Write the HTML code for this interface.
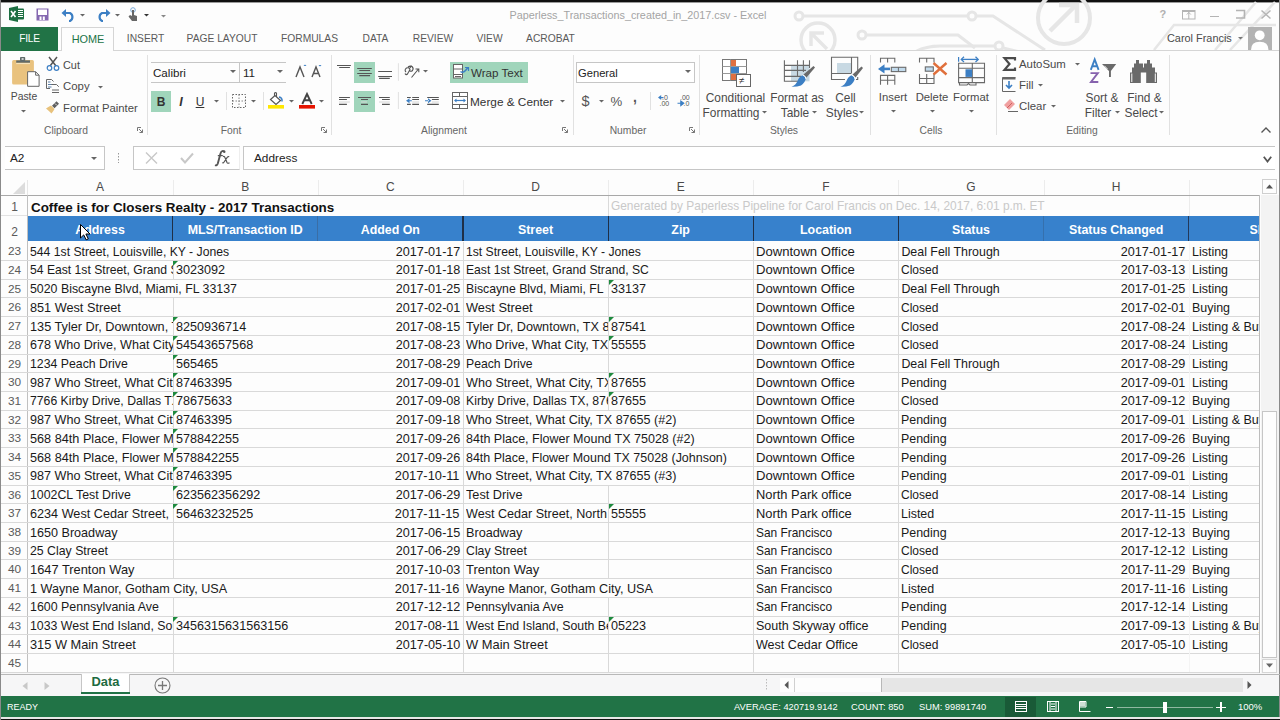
<!DOCTYPE html>
<html><head><meta charset="utf-8"><title>Excel</title>
<style>
html,body{margin:0;padding:0;}
body{width:1280px;height:720px;position:relative;overflow:hidden;background:#fdfdfd;font-family:"Liberation Sans", sans-serif;}
.t{position:absolute;white-space:nowrap;line-height:1;}
.r{position:absolute;}
.s{position:absolute;overflow:visible;}
</style></head><body>

<div class="r" style="left:0.00px;top:0.00px;width:1280.00px;height:1.50px;background:#101010;"></div>
<div class="r" style="left:0.00px;top:1.50px;width:1280.00px;height:0.80px;background:#9a9a9a;"></div>
<svg class="s" style="left:790px;top:0px;overflow:hidden" width="490" height="50" viewBox="0 0 490 50">
<g fill="none" stroke="#e6e6e6" stroke-width="3">
<path d="M9 16 H203 L255 50"/>
<circle cx="9" cy="16" r="4" fill="#fdfdfd"/>
<circle cx="182" cy="16" r="4" fill="#fdfdfd"/>
<path d="M72 35 H168 L185 48"/>
<circle cx="72" cy="35" r="4" fill="#fdfdfd"/>
<path d="M125 52 Q135 46 150 46 H205 L230 52"/>
<circle cx="209" cy="46" r="4" fill="#fdfdfd"/>
<circle cx="28" cy="40" r="17" stroke-width="3.5"/>
<path d="M37 49 L22 34 M21 46 V33 H34" stroke-width="3.5"/>
<circle cx="274" cy="18" r="26" stroke-width="4"/>
<path d="M260 31 L285 6 M269 5 H287 V23" stroke-width="4.5"/>
<path d="M364 50 L384 25 H486" stroke-width="2.5"/><path d="M425 50 L466 2 M440 50 L485 2" stroke-width="2.5"/>
</g></svg>
<svg class="s" style="left:9px;top:6px;" width="16" height="16" viewBox="0 0 16 16">
<path d="M0 2 L9 0 V16 L0 14 Z" fill="#1d6f42"/>
<rect x="8" y="2.5" width="7" height="11" rx="1" fill="#1d6f42"/>
<path d="M9 4.5 H14 M9 6.5 H14 M9 8.5 H14 M9 10.5 H14" stroke="#fff" stroke-width="1"/>
<path d="M2 5 L6.5 11 M6.5 5 L2 11" stroke="#fff" stroke-width="1.6"/></svg>
<svg class="s" style="left:36px;top:8px;" width="13" height="13" viewBox="0 0 13 13">
<rect x="0.5" y="0.5" width="12" height="12" fill="#8467b0"/>
<rect x="2" y="1.5" width="9" height="5.5" fill="#fff"/>
<rect x="3.5" y="8.5" width="2" height="3.5" fill="#fff"/>
<rect x="6.8" y="8.5" width="2" height="3.5" fill="#fff"/></svg>
<svg class="s" style="left:61px;top:9px;" width="15" height="13" viewBox="0 0 15 13">
<path d="M3 4 H9 A4.5 4.5 0 0 1 9 12 H8" fill="none" stroke="#3c7fc4" stroke-width="2.2"/>
<path d="M0.5 4 L5 0 V8 Z" fill="#3c7fc4"/></svg>
<svg class="s" style="left:79.5px;top:14px;" width="5.0" height="3.5" viewBox="0 0 5.0 3.5"><path d="M0 0 L5.0 0 L2.5 2.5 Z" fill="#666"/></svg>
<svg class="s" style="left:96px;top:9px;" width="15" height="13" viewBox="0 0 15 13">
<path d="M12 4 H6 A4.5 4.5 0 0 0 6 12 H7" fill="none" stroke="#3c7fc4" stroke-width="2.2"/>
<path d="M14.5 4 L10 0 V8 Z" fill="#3c7fc4"/></svg>
<svg class="s" style="left:114.5px;top:14px;" width="5.0" height="3.5" viewBox="0 0 5.0 3.5"><path d="M0 0 L5.0 0 L2.5 2.5 Z" fill="#666"/></svg>
<svg class="s" style="left:126px;top:7px;" width="12" height="15" viewBox="0 0 12 15">
<circle cx="7" cy="3" r="2.3" fill="none" stroke="#7aaad8" stroke-width="1"/>
<path d="M6 3 V9 L4 8 L2.5 9.5 L6 14 H11 V9 L8 8 V3 Z" fill="#666"/></svg>
<svg class="s" style="left:143.5px;top:14px;" width="5.0" height="3.5" viewBox="0 0 5.0 3.5"><path d="M0 0 L5.0 0 L2.5 2.5 Z" fill="#333"/></svg>
<svg class="s" style="left:160.5px;top:15px;" width="5.0" height="3.5" viewBox="0 0 5.0 3.5"><path d="M0 0 L5.0 0 L2.5 2.5 Z" fill="#888"/></svg>
<div class="t" style="left:338.00px;width:600px;text-align:center;top:9.86px;font-size:10.8px;color:#a4a4a4;font-weight:400;">Paperless_Transactions_created_in_2017.csv - Excel</div>
<div class="t" style="left:862.80px;width:600px;text-align:center;top:9.19px;font-size:11px;color:#b0b0b0;font-weight:700;">?</div>
<svg class="s" style="left:1182px;top:10px;" width="14" height="10" viewBox="0 0 14 10"><rect x="0.5" y="0.5" width="12.5" height="8.5" fill="none" stroke="#b4b4b4"/><path d="M0.5 1.5 H13 M6.8 2 V9 M4.8 4.5 L6.8 2.5 L8.8 4.5" fill="none" stroke="#b4b4b4"/></svg>
<div class="r" style="left:1210.00px;top:15.50px;width:9.00px;height:1.20px;background:#b4b4b4;"></div>
<svg class="s" style="left:1235px;top:9px;" width="11" height="11" viewBox="0 0 11 11"><path d="M1 1.5 H9.5 V9 H1" fill="none" stroke="#b4b4b4" stroke-width="1.6"/></svg>
<svg class="s" style="left:1261px;top:10px;" width="10" height="9" viewBox="0 0 10 9"><path d="M0.5 0.5 L9.5 8.5 M9.5 0.5 L0.5 8.5" stroke="#b4b4b4" stroke-width="1.5"/></svg>
<div class="t" style="left:1167.00px;top:32.77px;font-size:10.9px;color:#4a4a4a;font-weight:400;">Carol Francis</div>
<svg class="s" style="left:1237.5px;top:37px;" width="5.0" height="3.5" viewBox="0 0 5.0 3.5"><path d="M0 0 L5.0 0 L2.5 2.5 Z" fill="#777"/></svg>
<svg class="s" style="left:1248px;top:27px;" width="24" height="23" viewBox="0 0 24 23">
<rect width="24" height="23" fill="#b3b3b3"/>
<circle cx="11.7" cy="8.3" r="4.9" fill="#fff"/>
<path d="M3 23 Q3 14.8 11.7 14.8 Q20.5 14.8 20.5 23 Z" fill="#fff"/></svg>
<div class="r" style="left:0.00px;top:50.00px;width:1280.00px;height:1.00px;background:#d5d5d5;"></div>
<div class="r" style="left:1.00px;top:27.00px;width:57.00px;height:23.50px;background:#217346;"></div>
<div class="t" style="left:-270.50px;width:600px;text-align:center;top:34.17px;font-size:10.2px;color:#fff;font-weight:400;letter-spacing:-0.3px">FILE</div>
<div class="r" style="left:61px;top:27px;width:53px;height:24px;background:#fdfdfd;border:1px solid #d5d5d5;border-bottom:none;box-sizing:border-box;"></div>
<div class="t" style="left:-212.00px;width:600px;text-align:center;top:33.57px;font-size:10.9px;color:#217346;font-weight:400;">HOME</div>
<div class="t" style="left:-154.50px;width:600px;text-align:center;top:34.12px;font-size:10.25px;color:#5a5a5a;font-weight:400;">INSERT</div>
<div class="t" style="left:-78.00px;width:600px;text-align:center;top:34.12px;font-size:10.25px;color:#5a5a5a;font-weight:400;">PAGE LAYOUT</div>
<div class="t" style="left:9.50px;width:600px;text-align:center;top:34.12px;font-size:10.25px;color:#5a5a5a;font-weight:400;">FORMULAS</div>
<div class="t" style="left:75.50px;width:600px;text-align:center;top:34.12px;font-size:10.25px;color:#5a5a5a;font-weight:400;">DATA</div>
<div class="t" style="left:133.00px;width:600px;text-align:center;top:34.12px;font-size:10.25px;color:#5a5a5a;font-weight:400;">REVIEW</div>
<div class="t" style="left:189.50px;width:600px;text-align:center;top:34.12px;font-size:10.25px;color:#5a5a5a;font-weight:400;">VIEW</div>
<div class="t" style="left:250.50px;width:600px;text-align:center;top:34.12px;font-size:10.25px;color:#5a5a5a;font-weight:400;">ACROBAT</div>
<div class="r" style="left:146.50px;top:55.00px;width:1.00px;height:80.00px;background:#e1e1e1;"></div>
<div class="r" style="left:330.50px;top:55.00px;width:1.00px;height:80.00px;background:#e1e1e1;"></div>
<div class="r" style="left:572.50px;top:55.00px;width:1.00px;height:80.00px;background:#e1e1e1;"></div>
<div class="r" style="left:698.50px;top:55.00px;width:1.00px;height:80.00px;background:#e1e1e1;"></div>
<div class="r" style="left:869.50px;top:55.00px;width:1.00px;height:80.00px;background:#e1e1e1;"></div>
<div class="r" style="left:995.50px;top:55.00px;width:1.00px;height:80.00px;background:#e1e1e1;"></div>
<div class="r" style="left:1169.00px;top:55.00px;width:1.00px;height:80.00px;background:#e1e1e1;"></div>
<svg class="s" style="left:11px;top:56px;" width="30" height="34" viewBox="0 0 30 34">
<rect x="1.1" y="4" width="21.8" height="24.6" rx="1.5" fill="#e9c27e"/>
<rect x="5.2" y="4.4" width="13.8" height="2.3" fill="#5f6a6a"/>
<rect x="9" y="1" width="5.2" height="4" rx="0.8" fill="#5f6a6a"/>
<rect x="10.6" y="2.2" width="2" height="1.6" fill="#e9e9e9"/>
<path d="M5.2 7.6 H19" stroke="#f7e9c8" stroke-width="0.9"/>
<path d="M16.6 15.7 H24.6 L28.1 19.2 V30.3 H16.6 Z" fill="#fff" stroke="#666" stroke-width="1"/>
<path d="M24.6 15.7 V19.2 H28.1" fill="none" stroke="#666" stroke-width="1"/></svg>
<div class="t" style="left:-276.00px;width:600px;text-align:center;top:92.20px;font-size:10.4px;color:#4a4a4a;font-weight:400;">Paste</div>
<svg class="s" style="left:21.0px;top:110px;" width="5.0" height="3.5" viewBox="0 0 5.0 3.5"><path d="M0 0 L5.0 0 L2.5 2.5 Z" fill="#666"/></svg>
<svg class="s" style="left:46px;top:57px;" width="14" height="14" viewBox="0 0 14 14">
<path d="M3 0 L10 9 M11 0 L4 9" stroke="#555" stroke-width="1.5"/>
<circle cx="3.5" cy="11" r="2.3" fill="none" stroke="#3c7fc4" stroke-width="1.2"/>
<circle cx="10.5" cy="11" r="2.3" fill="none" stroke="#3c7fc4" stroke-width="1.2"/></svg>
<div class="t" style="left:63.00px;top:59.77px;font-size:10.9px;color:#4a4a4a;font-weight:400;">Cut</div>
<svg class="s" style="left:46px;top:79px;" width="14" height="15" viewBox="0 0 14 15">
<path d="M0.5 9.5 V0.5 H5.5 L7.5 2.5" fill="none" stroke="#666"/>
<path d="M2 3 H4.5 M2 5.5 H6 M2 8 H5.5" stroke="#5a7fa8"/>
<path d="M5.5 5.5 H10.5 L12.8 7.8 M6 11 H13 M6 13.5 H13" fill="none" stroke="#666"/>
<path d="M0.5 9.5 H4" stroke="#666"/></svg>
<div class="t" style="left:63.00px;top:81.35px;font-size:11.4px;color:#4a4a4a;font-weight:400;">Copy</div>
<svg class="s" style="left:97.5px;top:86px;" width="5.0" height="3.5" viewBox="0 0 5.0 3.5"><path d="M0 0 L5.0 0 L2.5 2.5 Z" fill="#666"/></svg>
<svg class="s" style="left:46px;top:100px;" width="14" height="14" viewBox="0 0 14 14">
<path d="M0 8.5 Q3 6.5 5 5.5 L8.5 9 Q7.5 11 5.5 13.5 Q3 11 0 8.5 Z" fill="#e8c27c"/>
<path d="M6 5.8 L10.5 1.2 L13 3.7 L8.5 8.3 Z" fill="#606060"/>
<path d="M9 3.5 L10.8 5.3" stroke="#fff" stroke-width="0.8"/></svg>
<div class="t" style="left:63.00px;top:103.43px;font-size:11.3px;color:#4a4a4a;font-weight:400;">Format Painter</div>
<div class="t" style="left:-234.00px;width:600px;text-align:center;top:126.18px;font-size:10.3px;color:#666;font-weight:400;">Clipboard</div>
<svg class="s" style="left:137px;top:127px;" width="6" height="6" viewBox="0 0 6 6"><path d="M0.5 0.5 H4 M0.5 0.5 V4 M2 2 L5.5 5.5 M5.5 2.5 V5.5 H2.5" fill="none" stroke="#777" stroke-width="1"/></svg>
<div class="r" style="left:151.00px;top:62.00px;width:135.00px;height:1.00px;background:#c6c6c6;"></div>
<div class="r" style="left:151.00px;top:82.00px;width:135.00px;height:1.00px;background:#c6c6c6;"></div>
<div class="r" style="left:239.00px;top:62.00px;width:1.00px;height:21.00px;background:#c6c6c6;"></div>
<div class="t" style="left:153.00px;top:67.18px;font-size:11.6px;color:#222;font-weight:400;">Calibri</div>
<svg class="s" style="left:230px;top:70px;" width="6" height="4" viewBox="0 0 6 4"><path d="M0 0 L6 0 L3 3 Z" fill="#666"/></svg>
<div class="t" style="left:243.00px;top:67.18px;font-size:11.6px;color:#222;font-weight:400;">11</div>
<svg class="s" style="left:277px;top:70px;" width="6" height="4" viewBox="0 0 6 4"><path d="M0 0 L6 0 L3 3 Z" fill="#666"/></svg>
<svg class="s" style="left:294px;top:64px;" width="28" height="14" viewBox="0 0 28 14">
<path d="M2 13 L6 3 L10 13" fill="none" stroke="#555" stroke-width="1.4"/>
<path d="M9.5 2 L11 0.5 L12.5 2" fill="#3c7fc4"/>
<path d="M18 13 L22 3 L26 13 M19.5 9.5 H24.5" fill="none" stroke="#555" stroke-width="1.4"/>
<path d="M24.5 1 L26 2.5 L27.5 1 Z" fill="#3c7fc4"/></svg>
<div class="r" style="left:151.00px;top:91.00px;width:20.00px;height:21.00px;background:#a0d5bb;"></div>
<div class="t" style="left:-139.00px;width:600px;text-align:center;top:96.34px;font-size:12px;color:#333;font-weight:700;">B</div>
<div class="t" style="left:-119.00px;width:600px;text-align:center;top:95.92px;font-size:12.5px;color:#333;font-weight:700;font-style:italic">I</div>
<div class="t" style="left:-100.00px;width:600px;text-align:center;top:96.34px;font-size:12px;color:#333;font-weight:400;text-decoration:underline">U</div>
<svg class="s" style="left:213.5px;top:100px;" width="5.0" height="3.5" viewBox="0 0 5.0 3.5"><path d="M0 0 L5.0 0 L2.5 2.5 Z" fill="#666"/></svg>
<div class="r" style="left:225.50px;top:92.00px;width:1.00px;height:18.00px;background:#e1e1e1;"></div>
<svg class="s" style="left:232px;top:94px;" width="14" height="14" viewBox="0 0 14 14"><rect x="0.5" y="0.5" width="13" height="13" fill="none" stroke="#666" stroke-dasharray="1.5 1.5"/><path d="M7 0.5 V13.5 M0.5 7 H13.5" stroke="#888" stroke-dasharray="1.5 1.5"/></svg>
<svg class="s" style="left:250.5px;top:100px;" width="5.0" height="3.5" viewBox="0 0 5.0 3.5"><path d="M0 0 L5.0 0 L2.5 2.5 Z" fill="#666"/></svg>
<div class="r" style="left:262.50px;top:92.00px;width:1.00px;height:18.00px;background:#e1e1e1;"></div>
<svg class="s" style="left:268px;top:92px;" width="17" height="18" viewBox="0 0 17 18">
<path d="M2.5 7.5 L7 3.5 L12.5 8.5 L8 12.5 Z" fill="#fff" stroke="#555" stroke-width="1.2"/>
<path d="M6.5 4 V1.2 Q7.5 0 8.5 1.2 V5" fill="none" stroke="#555" stroke-width="1.1"/>
<path d="M11 5 Q14.5 5.5 14 9.5" fill="none" stroke="#3c7fc4" stroke-width="1.5"/>
<rect x="0" y="13" width="16" height="3.6" fill="#ffe700"/></svg>
<svg class="s" style="left:288.5px;top:100px;" width="5.0" height="3.5" viewBox="0 0 5.0 3.5"><path d="M0 0 L5.0 0 L2.5 2.5 Z" fill="#666"/></svg>
<svg class="s" style="left:299px;top:92px;" width="17" height="18" viewBox="0 0 17 18">
<path d="M3.3 12 L8 2 L12.7 12 M5.2 8.3 H10.8" fill="none" stroke="#444" stroke-width="1.9"/>
<rect x="0" y="13" width="16" height="3.6" fill="#e51400"/></svg>
<svg class="s" style="left:318.5px;top:100px;" width="5.0" height="3.5" viewBox="0 0 5.0 3.5"><path d="M0 0 L5.0 0 L2.5 2.5 Z" fill="#666"/></svg>
<div class="t" style="left:-69.00px;width:600px;text-align:center;top:126.18px;font-size:10.3px;color:#666;font-weight:400;">Font</div>
<svg class="s" style="left:321px;top:127px;" width="6" height="6" viewBox="0 0 6 6"><path d="M0.5 0.5 H4 M0.5 0.5 V4 M2 2 L5.5 5.5 M5.5 2.5 V5.5 H2.5" fill="none" stroke="#777" stroke-width="1"/></svg>
<div class="r" style="left:354.00px;top:62.00px;width:21.00px;height:21.00px;background:#a0d5bb;"></div>
<div class="r" style="left:354.00px;top:91.00px;width:21.00px;height:21.00px;background:#a0d5bb;"></div>
<svg class="s" style="left:334px;top:58px;" width="110" height="56" viewBox="0 0 110 56">
<g stroke="#555" stroke-width="1.1">
<path d="M3 7.5 H16.9 M5.2 9.5 H15.9"/>
<path d="M23.2 10.5 H37.8 M25.3 12.5 H36.1 M23.2 15.5 H37.8 M25.3 17.6 H36.1"/>
<path d="M44.2 13.5 H58 M44.2 18.5 H58 M45.1 20.4 H55.8"/>
<path d="M5 39.5 H15.9 M5 41.5 H12.9 M5 46.4 H12.9"/>
<path d="M24 39.5 H37 M27 41.5 H34 M27 46.4 H34"/>
<path d="M45 39.5 H55.8 M48 41.5 H55.8 M48 46.4 H55.8"/>
<path d="M73 39.5 H76.8 M78.2 39.5 H85 M78.2 41.5 H85 M73 46.4 H76.8 M78.2 46.4 H85"/>
<path d="M93.2 39.5 H104.8 M97.9 41.5 H104.8 M93.2 46.4 H104.8"/>
</g>
<g stroke="#d6d6d6" stroke-width="1"><path d="M5 44 H15.9 M27 44 H33 M45 44 H55.8 M78.2 44 H85 M97.9 44 H104.8"/></g>
<path d="M72 42.7 L75.5 40.2 V45.2 Z M74.5 42.2 H77.8 V43.3 H74.5 Z" fill="#3c7fc4"/>
<path d="M97.5 42.7 L94 40.2 V45.2 Z M91 42.2 H95 V43.3 H91 Z" fill="#3c7fc4"/>
<path d="M64.4 5.2 V22.8 M64.4 34 V51" stroke="#e1e1e1" stroke-width="1"/>
<path d="M72 14 Q70 12 72.5 10 Q75 9 76 11.5 L73.5 16 Q72 17.5 71 15.5 M74 9 Q76 7.5 78 8.5 Q80 10.5 78.5 12.5 Q77 14 75.5 12.5 M77.5 7.5 L76 10" fill="none" stroke="#555" stroke-width="1.1"/>
<path d="M77.5 19.5 L84.5 11 M81.5 11 H84.8 V14.3" fill="none" stroke="#555" stroke-width="1.1"/></svg>
<svg class="s" style="left:423.0px;top:70px;" width="5.0" height="3.5" viewBox="0 0 5.0 3.5"><path d="M0 0 L5.0 0 L2.5 2.5 Z" fill="#666"/></svg>
<div class="r" style="left:450.00px;top:62.00px;width:78.00px;height:21.00px;background:#a0d5bb;"></div>
<svg class="s" style="left:453px;top:64px;" width="17" height="16" viewBox="0 0 17 16">
<rect x="0.5" y="0.5" width="9" height="13.5" fill="#fff" stroke="#666"/>
<path d="M0.5 5 H9.5 M0.5 10.5 H9.5" stroke="#666"/>
<path d="M2 12.5 H8" stroke="#666"/>
<path d="M7.5 7.5 Q10 9.5 12.5 6.5 L15 3.5" fill="none" stroke="#3c7fc4" stroke-width="1.5"/>
<path d="M12 3.5 H15.5 V7" fill="none" stroke="#3c7fc4" stroke-width="1.2"/></svg>
<div class="t" style="left:471.00px;top:66.78px;font-size:11.6px;color:#333;font-weight:400;">Wrap Text</div>
<svg class="s" style="left:452px;top:92px;" width="16" height="17" viewBox="0 0 16 17">
<rect x="0.5" y="0.5" width="15" height="16" fill="#fff" stroke="#666"/>
<path d="M0.5 4.5 H15.5 M0.5 12.5 H15.5 M7.5 0.5 V4.5 M7.5 12.5 V16.5" stroke="#666"/>
<path d="M3 8.5 H13" stroke="#3c7fc4" stroke-width="1.2"/>
<path d="M2 8.5 L4.5 6.5 V10.5 Z M14 8.5 L11.5 6.5 V10.5 Z" fill="#3c7fc4"/></svg>
<div class="t" style="left:470.00px;top:96.51px;font-size:11.8px;color:#333;font-weight:400;">Merge &amp; Center</div>
<svg class="s" style="left:559.5px;top:100px;" width="5.0" height="3.5" viewBox="0 0 5.0 3.5"><path d="M0 0 L5.0 0 L2.5 2.5 Z" fill="#666"/></svg>
<div class="t" style="left:144.00px;width:600px;text-align:center;top:126.18px;font-size:10.3px;color:#666;font-weight:400;">Alignment</div>
<svg class="s" style="left:562px;top:127px;" width="6" height="6" viewBox="0 0 6 6"><path d="M0.5 0.5 H4 M0.5 0.5 V4 M2 2 L5.5 5.5 M5.5 2.5 V5.5 H2.5" fill="none" stroke="#777" stroke-width="1"/></svg>
<div class="r" style="left:576px;top:62px;width:119px;height:21px;background:#fff;border:1px solid #c6c6c6;box-sizing:border-box;"></div>
<div class="t" style="left:578.00px;top:67.52px;font-size:11.2px;color:#222;font-weight:400;">General</div>
<svg class="s" style="left:685px;top:70px;" width="6" height="4" viewBox="0 0 6 4"><path d="M0 0 L6 0 L3 3 Z" fill="#666"/></svg>
<div class="t" style="left:285.50px;width:600px;text-align:center;top:94.03px;font-size:14.5px;color:#555;font-weight:400;">$</div>
<svg class="s" style="left:598.5px;top:100px;" width="5.0" height="3.5" viewBox="0 0 5.0 3.5"><path d="M0 0 L5.0 0 L2.5 2.5 Z" fill="#666"/></svg>
<div class="t" style="left:316.30px;width:600px;text-align:center;top:94.83px;font-size:13.2px;color:#555;font-weight:400;">%</div>
<div class="t" style="left:335.00px;width:600px;text-align:center;top:90.15px;font-size:14px;color:#555;font-weight:700;">,</div>
<div class="r" style="left:650.00px;top:92.00px;width:1.00px;height:18.00px;background:#e1e1e1;"></div>
<svg class="s" style="left:657px;top:94px;" width="14" height="13" viewBox="0 0 14 13">
<text x="5" y="6" font-size="7" fill="#555" font-family="Liberation Sans">.0</text>
<text x="2.5" y="12.3" font-size="7" fill="#555" font-family="Liberation Sans">.00</text>
<path d="M1 3.5 L4.2 1 V6 Z M3.5 3 H6.5 V4.2 H3.5 Z" fill="#3c7fc4"/></svg>
<svg class="s" style="left:677px;top:94px;" width="14" height="13" viewBox="0 0 14 13">
<text x="3" y="6" font-size="7" fill="#555" font-family="Liberation Sans">.00</text>
<text x="6.5" y="12.3" font-size="7" fill="#555" font-family="Liberation Sans">.0</text>
<path d="M0.5 9.3 H4 M6.8 9.3 L3.8 7 V11.6 Z" fill="#3c7fc4" stroke="#3c7fc4" stroke-width="1.1"/></svg>
<div class="t" style="left:328.00px;width:600px;text-align:center;top:126.18px;font-size:10.3px;color:#666;font-weight:400;">Number</div>
<svg class="s" style="left:689px;top:127px;" width="6" height="6" viewBox="0 0 6 6"><path d="M0.5 0.5 H4 M0.5 0.5 V4 M2 2 L5.5 5.5 M5.5 2.5 V5.5 H2.5" fill="none" stroke="#777" stroke-width="1"/></svg>
<svg class="s" style="left:722px;top:59px;" width="29" height="29" viewBox="0 0 29 29">
<rect x="0.5" y="0.5" width="24" height="21" fill="#fff" stroke="#777"/>
<path d="M0.5 7.5 H24.5 M0.5 14.5 H24.5 M8.5 0.5 V21.5" stroke="#999"/>
<rect x="9" y="1" width="5" height="6" fill="#e07040"/>
<rect x="9" y="8" width="8" height="6" fill="#3c7fc4"/>
<rect x="9" y="15" width="6" height="6" fill="#e07040"/>
<rect x="14.5" y="15.5" width="14" height="12" fill="#fff" stroke="#666"/>
<text x="17" y="25" font-size="10" fill="#333" font-family="Liberation Sans">&#8800;</text></svg>
<div class="t" style="left:435.50px;width:600px;text-align:center;top:92.73px;font-size:11.9px;color:#4a4a4a;font-weight:400;">Conditional</div>
<div class="t" style="left:431.00px;width:600px;text-align:center;top:107.53px;font-size:11.9px;color:#4a4a4a;font-weight:400;">Formatting</div>
<svg class="s" style="left:761.5px;top:111px;" width="5.0" height="3.5" viewBox="0 0 5.0 3.5"><path d="M0 0 L5.0 0 L2.5 2.5 Z" fill="#666"/></svg>
<svg class="s" style="left:775px;top:52px;" width="95" height="38" viewBox="0 0 95 38">
<rect x="16" y="13.4" width="18.5" height="15.9" fill="#c8d9e3"/>
<g fill="none" stroke="#6a6a6a" stroke-width="1.1">
<path d="M9.4 8.2 V29.3 H24 M22.5 8.2 V24 M28.4 8.2 V20 M34.5 8.2 V16 M9.4 13.4 H34.5 M9.4 18.4 H31 M9.4 24.4 H26"/>
</g>
<path d="M38.5 14 L40 15.5 L31.5 25.5 L28.5 22.5 Z" fill="#6a6a6a"/>
<path d="M28 23 L31 26 Q30 31 26 33.5 Q22 35 16.5 34.8 Q21 33 22.5 29 Q24 24.5 28 23 Z" fill="#3c7fc4"/>
<path d="M27.5 23 Q31 24 31 27" fill="none" stroke="#fff" stroke-width="1"/>
<rect x="62" y="11" width="14.3" height="10.3" fill="#c8d9e3"/>
<g fill="none" stroke="#6a6a6a" stroke-width="1.1">
<path d="M70 27.5 H56.5 V5.2 H82.7 V19 M76.5 5.2 V21.5 M56.5 21.5 H76 M82.7 25 V27.5 H81"/>
</g>
<path d="M86.5 14.5 L88 16 L80.5 25.5 L77.5 22.5 Z" fill="#6a6a6a"/>
<path d="M77 23 L80 26 Q79 31 75 33.5 Q71 35 65.5 34.8 Q70 33 71.5 29 Q73 24.5 77 23 Z" fill="#3c7fc4"/>
<path d="M76.5 23 Q80 24 80 27" fill="none" stroke="#fff" stroke-width="1"/></svg>
<div class="t" style="left:497.00px;width:600px;text-align:center;top:92.73px;font-size:11.9px;color:#4a4a4a;font-weight:400;">Format as</div>
<div class="t" style="left:495.00px;width:600px;text-align:center;top:107.53px;font-size:11.9px;color:#4a4a4a;font-weight:400;">Table</div>
<svg class="s" style="left:811.5px;top:111px;" width="5.0" height="3.5" viewBox="0 0 5.0 3.5"><path d="M0 0 L5.0 0 L2.5 2.5 Z" fill="#666"/></svg>
<div class="t" style="left:545.50px;width:600px;text-align:center;top:92.73px;font-size:11.9px;color:#4a4a4a;font-weight:400;">Cell</div>
<div class="t" style="left:542.00px;width:600px;text-align:center;top:107.53px;font-size:11.9px;color:#4a4a4a;font-weight:400;">Styles</div>
<svg class="s" style="left:858.5px;top:111px;" width="5.0" height="3.5" viewBox="0 0 5.0 3.5"><path d="M0 0 L5.0 0 L2.5 2.5 Z" fill="#666"/></svg>
<div class="t" style="left:484.00px;width:600px;text-align:center;top:126.18px;font-size:10.3px;color:#666;font-weight:400;">Styles</div>
<svg class="s" style="left:875px;top:52px;" width="115" height="36" viewBox="0 0 115 36">
<g fill="none" stroke="#6a6a6a" stroke-width="1.1">
<path d="M5.5 10.5 V6.3 H19.8 V10.5 M12.6 6.3 V10.5"/>
<path d="M5.5 32.8 V23.4 H19.8 V32.8 M12.6 23.4 V32.8 M5.5 28.3 H19.8"/>
<path d="M44.5 10.5 V6.3 H59 V10.5 M51.7 6.3 V10.5"/>
<path d="M44.5 22 V31.5 H59 V22 M51.7 22 V31.5 M44.5 26.5 H59"/>
<path d="M83.6 11.3 H109.5 V30.6 H83.6 Z M83.6 16.2 H109.5 M83.6 25.6 H109.5 M97.3 11.3 V30.6"/>
<path d="M84.5 30.6 V33 H92 L93.5 31.5 L95 33 H101 V30.6"/>
</g>
<rect x="16.3" y="15.3" width="14.5" height="4.3" fill="#c2dbed" stroke="#6a6a6a" stroke-width="1.1"/>
<path d="M23.4 15.3 V19.6" stroke="#6a6a6a"/>
<path d="M6 16.9 H15" stroke="#3c7fc4" stroke-width="2.6"/>
<path d="M3 16.9 L9.5 12.3 V21.5 Z" fill="#3c7fc4"/>
<rect x="50.3" y="14.9" width="8" height="4.3" fill="#c2dbed" stroke="#6a6a6a" stroke-width="1.1"/>
<path d="M58.5 11 L71.5 22.5 M71.5 11 L58.5 22.5" stroke="#e0703c" stroke-width="2.4"/>
<path d="M83.6 5 V9.8" stroke="#3c7fc4" stroke-width="1.2"/>
<path d="M86.5 7.4 H103" stroke="#3c7fc4" stroke-width="1.3"/>
<path d="M89 4.8 L86.3 7.4 L89 10 M100.5 4.8 L103.2 7.4 L100.5 10" fill="none" stroke="#3c7fc4" stroke-width="1.3"/>
<rect x="90.5" y="17.3" width="6.6" height="7.6" fill="#3c7fc4"/></svg>
<div class="t" style="left:593.00px;width:600px;text-align:center;top:92.43px;font-size:11.3px;color:#4a4a4a;font-weight:400;">Insert</div>
<svg class="s" style="left:890.5px;top:110px;" width="5.0" height="3.5" viewBox="0 0 5.0 3.5"><path d="M0 0 L5.0 0 L2.5 2.5 Z" fill="#666"/></svg>
<div class="t" style="left:632.00px;width:600px;text-align:center;top:92.43px;font-size:11.3px;color:#4a4a4a;font-weight:400;">Delete</div>
<svg class="s" style="left:929.5px;top:110px;" width="5.0" height="3.5" viewBox="0 0 5.0 3.5"><path d="M0 0 L5.0 0 L2.5 2.5 Z" fill="#666"/></svg>
<div class="t" style="left:671.00px;width:600px;text-align:center;top:92.43px;font-size:11.3px;color:#4a4a4a;font-weight:400;">Format</div>
<svg class="s" style="left:968.5px;top:110px;" width="5.0" height="3.5" viewBox="0 0 5.0 3.5"><path d="M0 0 L5.0 0 L2.5 2.5 Z" fill="#666"/></svg>
<div class="t" style="left:631.00px;width:600px;text-align:center;top:126.18px;font-size:10.3px;color:#666;font-weight:400;">Cells</div>
<svg class="s" style="left:1003px;top:57px;" width="13" height="14" viewBox="0 0 13 14"><path d="M12 3.5 V1.2 H1.5 L6.5 7 L1.5 12.8 H12 V10.5" fill="none" stroke="#4a4a4a" stroke-width="2.2" stroke-linejoin="miter"/></svg>
<div class="t" style="left:1019.00px;top:58.65px;font-size:11.4px;color:#4a4a4a;font-weight:400;">AutoSum</div>
<svg class="s" style="left:1074.5px;top:63px;" width="5.0" height="3.5" viewBox="0 0 5.0 3.5"><path d="M0 0 L5.0 0 L2.5 2.5 Z" fill="#666"/></svg>
<svg class="s" style="left:1002px;top:77px;" width="14" height="15" viewBox="0 0 14 15">
<path d="M0.5 14.5 V0.5 H13.5" fill="none" stroke="#666"/>
<rect x="0.5" y="0.5" width="13" height="2" fill="#666"/>
<path d="M7 4 V11 M4 8 L7 11 L10 8" fill="none" stroke="#3c7fc4" stroke-width="1.6"/>
<path d="M0.5 14.5 H13.5" stroke="#666"/></svg>
<div class="t" style="left:1019.00px;top:80.35px;font-size:11.4px;color:#4a4a4a;font-weight:400;">Fill</div>
<svg class="s" style="left:1037.5px;top:84px;" width="5.0" height="3.5" viewBox="0 0 5.0 3.5"><path d="M0 0 L5.0 0 L2.5 2.5 Z" fill="#666"/></svg>
<svg class="s" style="left:1003px;top:97px;" width="15" height="15" viewBox="0 0 15 15">
<path d="M1 8 L7 2 L12 7 L6 13 Z" fill="#f0a0a0"/>
<path d="M4 11 L9 6" stroke="#d06060"/>
<path d="M5 14.5 H15" stroke="#666"/></svg>
<div class="t" style="left:1019.00px;top:101.35px;font-size:11.4px;color:#4a4a4a;font-weight:400;">Clear</div>
<svg class="s" style="left:1050.5px;top:105px;" width="5.0" height="3.5" viewBox="0 0 5.0 3.5"><path d="M0 0 L5.0 0 L2.5 2.5 Z" fill="#666"/></svg>
<svg class="s" style="left:1080px;top:52px;" width="85" height="38" viewBox="0 0 85 38">
<path d="M10.8 17.8 L14.7 7.5 L18.6 17.8 M12.3 14.2 H17.1" fill="none" stroke="#3c7fc4" stroke-width="1.9"/>
<path d="M10.5 21.1 H17.8 L11 30 H18.3" fill="none" stroke="#8662ad" stroke-width="1.9"/>
<path d="M22 12 H36.2 L30.9 19 V25 H29 V19 Z" fill="#6a6a6a"/>
<path d="M24.5 13.8 L27.5 17" stroke="#fff" stroke-width="0.8"/></svg>
<div class="t" style="left:802.00px;width:600px;text-align:center;top:92.73px;font-size:11.9px;color:#4a4a4a;font-weight:400;">Sort &amp;</div>
<div class="t" style="left:798.00px;width:600px;text-align:center;top:107.53px;font-size:11.9px;color:#4a4a4a;font-weight:400;">Filter</div>
<svg class="s" style="left:1114.5px;top:111px;" width="5.0" height="3.5" viewBox="0 0 5.0 3.5"><path d="M0 0 L5.0 0 L2.5 2.5 Z" fill="#666"/></svg>
<svg class="s" style="left:1130px;top:59px;" width="28" height="25" viewBox="0 0 28 25">
<path d="M0 24 V13.5 H2 V8.5 H4 V4.5 H6 V1 H9 V4.5 H13 V8.5 H14 V4.5 H17 V1 H20 V4.5 H22 V8.5 H25 V13.5 H27 V24 H16.2 V13.6 H10.8 V24 Z" fill="#6a6a6a"/>
<path d="M1.8 14.5 V23 M25.3 14.5 V23" stroke="#fff" stroke-width="1"/></svg>
<div class="t" style="left:844.50px;width:600px;text-align:center;top:92.73px;font-size:11.9px;color:#4a4a4a;font-weight:400;">Find &amp;</div>
<div class="t" style="left:841.00px;width:600px;text-align:center;top:107.53px;font-size:11.9px;color:#4a4a4a;font-weight:400;">Select</div>
<svg class="s" style="left:1158.5px;top:111px;" width="5.0" height="3.5" viewBox="0 0 5.0 3.5"><path d="M0 0 L5.0 0 L2.5 2.5 Z" fill="#666"/></svg>
<div class="t" style="left:782.00px;width:600px;text-align:center;top:126.18px;font-size:10.3px;color:#666;font-weight:400;">Editing</div>
<svg class="s" style="left:1261px;top:127px;" width="10" height="6" viewBox="0 0 10 6"><path d="M0.5 5.5 L5 1 L9.5 5.5" fill="none" stroke="#555" stroke-width="1.4"/></svg>
<div class="r" style="left:5px;top:146px;width:100px;height:24px;background:#fff;border:1px solid #c6c6c6;border-left:none;box-sizing:border-box;"></div>
<div class="t" style="left:10.00px;top:153.01px;font-size:11.8px;color:#222;font-weight:400;">A2</div>
<svg class="s" style="left:91px;top:157px;" width="6" height="4" viewBox="0 0 6 4"><path d="M0 0 L6 0 L3 3 Z" fill="#666"/></svg>
<svg class="s" style="left:117px;top:153px;" width="3" height="10" viewBox="0 0 3 10"><path d="M1.5 0 V10" stroke="#999" stroke-dasharray="1.5 1.5"/></svg>
<div class="r" style="left:133px;top:146px;width:107px;height:24px;background:#fff;border:1px solid #c6c6c6;border-right-color:#eeeeee;box-sizing:border-box;"></div>
<svg class="s" style="left:145px;top:152px;" width="13" height="12" viewBox="0 0 13 12"><path d="M1 0.5 L12 11.5 M12 0.5 L1 11.5" stroke="#c8c8c8" stroke-width="1.4"/></svg>
<svg class="s" style="left:180px;top:152px;" width="14" height="12" viewBox="0 0 14 12"><path d="M1 6 L5 10.5 L13 1.5" fill="none" stroke="#c8c8c8" stroke-width="2"/></svg>
<svg class="s" style="left:214px;top:150px;" width="17" height="17" viewBox="0 0 17 17"><path d="M10.5 1.5 Q7.5 0 6.5 3.5 L3.8 13.5 Q3 16 1 15.2" fill="none" stroke="#555" stroke-width="1.9"/><circle cx="10.3" cy="1.8" r="1.2" fill="#555"/><path d="M3.8 5.6 H8.8" stroke="#555" stroke-width="1.2"/><path d="M9 6.5 Q10.5 6 11.2 8 L13 12.5 Q13.6 13.8 15.5 12.8 M15.2 6.8 Q14 6 12.5 8.3 L10.3 11.8 Q9.3 13.5 8.2 12.6" fill="none" stroke="#555" stroke-width="1.2"/></svg>
<div class="r" style="left:243px;top:146px;width:1032px;height:24px;background:#fff;border:1px solid #c6c6c6;border-right:none;box-sizing:border-box;"></div>
<div class="t" style="left:254.00px;top:153.01px;font-size:11.8px;color:#222;font-weight:400;">Address</div>
<svg class="s" style="left:1263px;top:156px;" width="9" height="7" viewBox="0 0 9 7"><path d="M0.8 0.8 L4.5 5.5 L8.2 0.8" fill="none" stroke="#555" stroke-width="1.8"/></svg>
<div class="r" style="left:1.00px;top:176.00px;width:1259.00px;height:19.40px;background:#fdfdfd;"></div>
<svg class="s" style="left:13px;top:182px;" width="13" height="13" viewBox="0 0 13 13"><path d="M12 0 V12 H0 Z" fill="#dcdcdc"/></svg>
<div class="t" style="left:-200.02px;width:600px;text-align:center;top:181.34px;font-size:12px;color:#4a4a4a;font-weight:400;">A</div>
<div class="t" style="left:-54.85px;width:600px;text-align:center;top:181.34px;font-size:12px;color:#4a4a4a;font-weight:400;">B</div>
<div class="t" style="left:90.32px;width:600px;text-align:center;top:181.34px;font-size:12px;color:#4a4a4a;font-weight:400;">C</div>
<div class="t" style="left:235.50px;width:600px;text-align:center;top:181.34px;font-size:12px;color:#4a4a4a;font-weight:400;">D</div>
<div class="t" style="left:380.66px;width:600px;text-align:center;top:181.34px;font-size:12px;color:#4a4a4a;font-weight:400;">E</div>
<div class="t" style="left:525.83px;width:600px;text-align:center;top:181.34px;font-size:12px;color:#4a4a4a;font-weight:400;">F</div>
<div class="t" style="left:671.00px;width:600px;text-align:center;top:181.34px;font-size:12px;color:#4a4a4a;font-weight:400;">G</div>
<div class="t" style="left:816.17px;width:600px;text-align:center;top:181.34px;font-size:12px;color:#4a4a4a;font-weight:400;">H</div>
<div class="r" style="left:172.57px;top:180.00px;width:1.00px;height:15.00px;background:#ececec;"></div>
<div class="r" style="left:317.74px;top:180.00px;width:1.00px;height:15.00px;background:#ececec;"></div>
<div class="r" style="left:462.91px;top:180.00px;width:1.00px;height:15.00px;background:#ececec;"></div>
<div class="r" style="left:608.08px;top:180.00px;width:1.00px;height:15.00px;background:#ececec;"></div>
<div class="r" style="left:753.25px;top:180.00px;width:1.00px;height:15.00px;background:#ececec;"></div>
<div class="r" style="left:898.42px;top:180.00px;width:1.00px;height:15.00px;background:#ececec;"></div>
<div class="r" style="left:1043.59px;top:180.00px;width:1.00px;height:15.00px;background:#ececec;"></div>
<div class="r" style="left:1188.76px;top:180.00px;width:1.00px;height:15.00px;background:#ececec;"></div>
<div class="r" style="left:27.00px;top:180.00px;width:1.00px;height:15.00px;background:#e6e6e6;"></div>
<div class="r" style="left:0.00px;top:195.00px;width:1258.80px;height:1.00px;background:#a8a8a8;"></div>
<div class="r" style="left:27.00px;top:195.00px;width:1.00px;height:478.00px;background:#c0c0c0;"></div>
<div class="t" style="left:31.00px;top:200.94px;font-size:13.42px;color:#111;font-weight:700;">Coffee is for Closers Realty - 2017 Transactions</div>
<div class="r" style="left:608.08px;top:196.00px;width:1.00px;height:20.00px;background:#dadada;"></div>
<div class="r" style="left:1188.76px;top:196.00px;width:1.00px;height:20.00px;background:#ececec;"></div>
<div class="t" style="left:611.00px;top:201.43px;font-size:11.9px;color:#c9c9c9;font-weight:400;">Generated by Paperless Pipeline for Carol Francis on Dec. 14, 2017, 6:01 p.m. ET</div>
<div class="t" style="left:-285.50px;width:600px;text-align:center;top:201.34px;font-size:12px;color:#5a5a5a;font-weight:400;">1</div>
<div class="r" style="left:1.00px;top:215.30px;width:26.00px;height:1.00px;background:#e2e2e2;"></div>
<div class="r" style="left:1258.80px;top:195.00px;width:1.00px;height:478.00px;background:#bdbdbd;"></div>
<div class="r" style="left:28.00px;top:215.90px;width:1230.80px;height:25.30px;background:rgb(55,129,204);"></div>
<div class="t" style="left:-200.02px;width:600px;text-align:center;top:223.50px;font-size:12.4px;color:#fff;font-weight:700;">Address</div>
<div class="t" style="left:-54.85px;width:600px;text-align:center;top:223.50px;font-size:12.4px;color:#fff;font-weight:700;">MLS/Transaction ID</div>
<div class="t" style="left:90.32px;width:600px;text-align:center;top:223.50px;font-size:12.4px;color:#fff;font-weight:700;">Added On</div>
<div class="t" style="left:235.50px;width:600px;text-align:center;top:223.50px;font-size:12.4px;color:#fff;font-weight:700;">Street</div>
<div class="t" style="left:380.66px;width:600px;text-align:center;top:223.50px;font-size:12.4px;color:#fff;font-weight:700;">Zip</div>
<div class="t" style="left:525.83px;width:600px;text-align:center;top:223.50px;font-size:12.4px;color:#fff;font-weight:700;">Location</div>
<div class="t" style="left:671.00px;width:600px;text-align:center;top:223.50px;font-size:12.4px;color:#fff;font-weight:700;">Status</div>
<div class="t" style="left:816.17px;width:600px;text-align:center;top:223.50px;font-size:12.4px;color:#fff;font-weight:700;">Status Changed</div>
<div class="t" style="left:1249.50px;top:223.50px;font-size:12.4px;color:#fff;font-weight:700;width:9.3px;overflow:hidden">Sh</div>
<div class="r" style="left:172.07px;top:215.90px;width:1.20px;height:25.30px;background:#1f2f46;"></div>
<div class="r" style="left:317.24px;top:215.90px;width:1.20px;height:25.30px;background:#3a6ea6;"></div>
<div class="r" style="left:462.41px;top:215.90px;width:1.20px;height:25.30px;background:#1f2f46;"></div>
<div class="r" style="left:607.58px;top:215.90px;width:1.20px;height:25.30px;background:#1f2f46;"></div>
<div class="r" style="left:752.75px;top:215.90px;width:1.20px;height:25.30px;background:#1f2f46;"></div>
<div class="r" style="left:897.92px;top:215.90px;width:1.20px;height:25.30px;background:#1f2f46;"></div>
<div class="r" style="left:1043.09px;top:215.90px;width:1.20px;height:25.30px;background:#3570ad;"></div>
<div class="r" style="left:1188.26px;top:215.90px;width:1.20px;height:25.30px;background:#23395a;"></div>
<div class="t" style="left:-285.50px;width:600px;text-align:center;top:226.34px;font-size:12px;color:#5a5a5a;font-weight:400;">2</div>
<div class="r" style="left:0.00px;top:259.90px;width:1258.80px;height:1.00px;background:#d9d9d9;"></div>
<div class="t" style="left:-285.50px;width:600px;text-align:center;top:246.21px;font-size:11.8px;color:#5a5a5a;font-weight:400;">23</div>
<div class="r" style="left:462.91px;top:241.68px;width:1.00px;height:18.72px;background:#d9d9d9;"></div>
<div class="r" style="left:753.25px;top:241.68px;width:1.00px;height:18.72px;background:#d9d9d9;"></div>
<div class="r" style="left:898.42px;top:241.68px;width:1.00px;height:18.72px;background:#d9d9d9;"></div>
<div class="r" style="left:1188.76px;top:241.68px;width:1.00px;height:18.72px;background:#f4f4f4;"></div>
<div class="t" style="left:30.40px;top:245.70px;font-size:12.4px;color:#1a1a1a;width:287.34px;overflow:hidden;padding-bottom:4px;"><span style="display:inline-block;transform:scaleX(0.9845);transform-origin:0 50%;">544 1st Street, Louisville, KY - Jones</span></div>
<div class="t" style="right:820.09px;top:245.70px;font-size:12.4px;color:#1a1a1a;transform:scaleX(1.0192);transform-origin:100% 50%;">2017-01-17</div>
<div class="t" style="left:465.91px;top:245.70px;font-size:12.4px;color:#1a1a1a;width:287.34px;overflow:hidden;padding-bottom:4px;"><span style="display:inline-block;transform:scaleX(0.9820);transform-origin:0 50%;">1st Street, Louisville, KY - Jones</span></div>
<div class="t" style="left:756.25px;top:245.70px;font-size:12.4px;color:#1a1a1a;width:142.17px;overflow:hidden;padding-bottom:4px;"><span style="display:inline-block;transform:scaleX(1.0567);transform-origin:0 50%;">Downtown Office</span></div>
<div class="t" style="left:901.42px;top:245.70px;font-size:12.4px;color:#1a1a1a;width:142.17px;overflow:hidden;padding-bottom:4px;"><span style="display:inline-block;transform:scaleX(1.0000);transform-origin:0 50%;">Deal Fell Through</span></div>
<div class="t" style="right:94.24px;top:245.70px;font-size:12.4px;color:#1a1a1a;transform:scaleX(1.0192);transform-origin:100% 50%;">2017-01-17</div>
<div class="t" style="left:1191.76px;top:245.70px;font-size:12.4px;color:#1a1a1a;width:67.04px;overflow:hidden;padding-bottom:4px;"><span style="display:inline-block;transform:scaleX(1.0053);transform-origin:0 50%;">Listing</span></div>
<div class="r" style="left:0.00px;top:278.62px;width:1258.80px;height:1.00px;background:#d9d9d9;"></div>
<div class="t" style="left:-285.50px;width:600px;text-align:center;top:264.93px;font-size:11.8px;color:#5a5a5a;font-weight:400;">24</div>
<div class="r" style="left:172.57px;top:260.40px;width:1.00px;height:18.72px;background:#d9d9d9;"></div>
<div class="r" style="left:462.91px;top:260.40px;width:1.00px;height:18.72px;background:#d9d9d9;"></div>
<div class="r" style="left:753.25px;top:260.40px;width:1.00px;height:18.72px;background:#d9d9d9;"></div>
<div class="r" style="left:898.42px;top:260.40px;width:1.00px;height:18.72px;background:#d9d9d9;"></div>
<div class="r" style="left:1188.76px;top:260.40px;width:1.00px;height:18.72px;background:#f4f4f4;"></div>
<div class="t" style="left:30.40px;top:264.42px;font-size:12.4px;color:#1a1a1a;width:142.17px;overflow:hidden;padding-bottom:4px;"><span style="display:inline-block;transform:scaleX(0.9806);transform-origin:0 50%;">54 East 1st Street, Grand Strand, SC</span></div>
<div class="t" style="left:175.57px;top:264.42px;font-size:12.4px;color:#1a1a1a;width:142.17px;overflow:hidden;padding-bottom:4px;"><span style="display:inline-block;transform:scaleX(1.0180);transform-origin:0 50%;">3023092</span></div>
<svg class="s" style="left:173px;top:261px;" width="5" height="5" viewBox="0 0 5 5"><path d="M0 0 H5 L0 5 Z" fill="#1e8a3e"/></svg>
<div class="t" style="right:820.09px;top:264.42px;font-size:12.4px;color:#1a1a1a;transform:scaleX(1.0192);transform-origin:100% 50%;">2017-01-18</div>
<div class="t" style="left:465.91px;top:264.42px;font-size:12.4px;color:#1a1a1a;width:287.34px;overflow:hidden;padding-bottom:4px;"><span style="display:inline-block;transform:scaleX(0.9791);transform-origin:0 50%;">East 1st Street, Grand Strand, SC</span></div>
<div class="t" style="left:756.25px;top:264.42px;font-size:12.4px;color:#1a1a1a;width:142.17px;overflow:hidden;padding-bottom:4px;"><span style="display:inline-block;transform:scaleX(1.0567);transform-origin:0 50%;">Downtown Office</span></div>
<div class="t" style="left:901.42px;top:264.42px;font-size:12.4px;color:#1a1a1a;width:142.17px;overflow:hidden;padding-bottom:4px;"><span style="display:inline-block;transform:scaleX(0.9703);transform-origin:0 50%;">Closed</span></div>
<div class="t" style="right:94.24px;top:264.42px;font-size:12.4px;color:#1a1a1a;transform:scaleX(1.0192);transform-origin:100% 50%;">2017-03-13</div>
<div class="t" style="left:1191.76px;top:264.42px;font-size:12.4px;color:#1a1a1a;width:67.04px;overflow:hidden;padding-bottom:4px;"><span style="display:inline-block;transform:scaleX(1.0053);transform-origin:0 50%;">Listing</span></div>
<div class="r" style="left:0.00px;top:297.34px;width:1258.80px;height:1.00px;background:#d9d9d9;"></div>
<div class="t" style="left:-285.50px;width:600px;text-align:center;top:283.65px;font-size:11.8px;color:#5a5a5a;font-weight:400;">25</div>
<div class="r" style="left:462.91px;top:279.12px;width:1.00px;height:18.72px;background:#d9d9d9;"></div>
<div class="r" style="left:608.08px;top:279.12px;width:1.00px;height:18.72px;background:#d9d9d9;"></div>
<div class="r" style="left:753.25px;top:279.12px;width:1.00px;height:18.72px;background:#d9d9d9;"></div>
<div class="r" style="left:898.42px;top:279.12px;width:1.00px;height:18.72px;background:#d9d9d9;"></div>
<div class="r" style="left:1188.76px;top:279.12px;width:1.00px;height:18.72px;background:#f4f4f4;"></div>
<div class="t" style="left:30.40px;top:283.14px;font-size:12.4px;color:#1a1a1a;width:287.34px;overflow:hidden;padding-bottom:4px;"><span style="display:inline-block;transform:scaleX(0.9973);transform-origin:0 50%;">5020 Biscayne Blvd, Miami, FL 33137</span></div>
<div class="t" style="right:820.09px;top:283.14px;font-size:12.4px;color:#1a1a1a;transform:scaleX(1.0192);transform-origin:100% 50%;">2017-01-25</div>
<div class="t" style="left:465.91px;top:283.14px;font-size:12.4px;color:#1a1a1a;width:142.17px;overflow:hidden;padding-bottom:4px;"><span style="display:inline-block;transform:scaleX(0.9892);transform-origin:0 50%;">Biscayne Blvd, Miami, FL</span></div>
<div class="t" style="left:611.08px;top:283.14px;font-size:12.4px;color:#1a1a1a;width:142.17px;overflow:hidden;padding-bottom:4px;"><span style="display:inline-block;transform:scaleX(1.0180);transform-origin:0 50%;">33137</span></div>
<svg class="s" style="left:609px;top:280px;" width="5" height="5" viewBox="0 0 5 5"><path d="M0 0 H5 L0 5 Z" fill="#1e8a3e"/></svg>
<div class="t" style="left:756.25px;top:283.14px;font-size:12.4px;color:#1a1a1a;width:142.17px;overflow:hidden;padding-bottom:4px;"><span style="display:inline-block;transform:scaleX(1.0567);transform-origin:0 50%;">Downtown Office</span></div>
<div class="t" style="left:901.42px;top:283.14px;font-size:12.4px;color:#1a1a1a;width:142.17px;overflow:hidden;padding-bottom:4px;"><span style="display:inline-block;transform:scaleX(1.0000);transform-origin:0 50%;">Deal Fell Through</span></div>
<div class="t" style="right:94.24px;top:283.14px;font-size:12.4px;color:#1a1a1a;transform:scaleX(1.0192);transform-origin:100% 50%;">2017-01-25</div>
<div class="t" style="left:1191.76px;top:283.14px;font-size:12.4px;color:#1a1a1a;width:67.04px;overflow:hidden;padding-bottom:4px;"><span style="display:inline-block;transform:scaleX(1.0053);transform-origin:0 50%;">Listing</span></div>
<div class="r" style="left:0.00px;top:316.06px;width:1258.80px;height:1.00px;background:#d9d9d9;"></div>
<div class="t" style="left:-285.50px;width:600px;text-align:center;top:302.37px;font-size:11.8px;color:#5a5a5a;font-weight:400;">26</div>
<div class="r" style="left:172.57px;top:297.84px;width:1.00px;height:18.72px;background:#d9d9d9;"></div>
<div class="r" style="left:462.91px;top:297.84px;width:1.00px;height:18.72px;background:#d9d9d9;"></div>
<div class="r" style="left:608.08px;top:297.84px;width:1.00px;height:18.72px;background:#d9d9d9;"></div>
<div class="r" style="left:753.25px;top:297.84px;width:1.00px;height:18.72px;background:#d9d9d9;"></div>
<div class="r" style="left:898.42px;top:297.84px;width:1.00px;height:18.72px;background:#d9d9d9;"></div>
<div class="r" style="left:1188.76px;top:297.84px;width:1.00px;height:18.72px;background:#f4f4f4;"></div>
<div class="t" style="left:30.40px;top:301.86px;font-size:12.4px;color:#1a1a1a;width:287.34px;overflow:hidden;padding-bottom:4px;"><span style="display:inline-block;transform:scaleX(1.0244);transform-origin:0 50%;">851 West Street</span></div>
<div class="t" style="right:820.09px;top:301.86px;font-size:12.4px;color:#1a1a1a;transform:scaleX(1.0192);transform-origin:100% 50%;">2017-02-01</div>
<div class="t" style="left:465.91px;top:301.86px;font-size:12.4px;color:#1a1a1a;width:287.34px;overflow:hidden;padding-bottom:4px;"><span style="display:inline-block;transform:scaleX(1.0326);transform-origin:0 50%;">West Street</span></div>
<div class="t" style="left:756.25px;top:301.86px;font-size:12.4px;color:#1a1a1a;width:142.17px;overflow:hidden;padding-bottom:4px;"><span style="display:inline-block;transform:scaleX(1.0567);transform-origin:0 50%;">Downtown Office</span></div>
<div class="t" style="left:901.42px;top:301.86px;font-size:12.4px;color:#1a1a1a;width:142.17px;overflow:hidden;padding-bottom:4px;"><span style="display:inline-block;transform:scaleX(0.9703);transform-origin:0 50%;">Closed</span></div>
<div class="t" style="right:94.24px;top:301.86px;font-size:12.4px;color:#1a1a1a;transform:scaleX(1.0192);transform-origin:100% 50%;">2017-02-01</div>
<div class="t" style="left:1191.76px;top:301.86px;font-size:12.4px;color:#1a1a1a;width:67.04px;overflow:hidden;padding-bottom:4px;"><span style="display:inline-block;transform:scaleX(1.0037);transform-origin:0 50%;">Buying</span></div>
<div class="r" style="left:0.00px;top:334.78px;width:1258.80px;height:1.00px;background:#d9d9d9;"></div>
<div class="t" style="left:-285.50px;width:600px;text-align:center;top:321.09px;font-size:11.8px;color:#5a5a5a;font-weight:400;">27</div>
<div class="r" style="left:172.57px;top:316.56px;width:1.00px;height:18.72px;background:#d9d9d9;"></div>
<div class="r" style="left:462.91px;top:316.56px;width:1.00px;height:18.72px;background:#d9d9d9;"></div>
<div class="r" style="left:608.08px;top:316.56px;width:1.00px;height:18.72px;background:#d9d9d9;"></div>
<div class="r" style="left:753.25px;top:316.56px;width:1.00px;height:18.72px;background:#d9d9d9;"></div>
<div class="r" style="left:898.42px;top:316.56px;width:1.00px;height:18.72px;background:#d9d9d9;"></div>
<div class="r" style="left:1188.76px;top:316.56px;width:1.00px;height:18.72px;background:#f4f4f4;"></div>
<div class="t" style="left:30.40px;top:320.58px;font-size:12.4px;color:#1a1a1a;width:142.17px;overflow:hidden;padding-bottom:4px;"><span style="display:inline-block;transform:scaleX(1.0254);transform-origin:0 50%;">135 Tyler Dr, Downtown, TX</span></div>
<div class="t" style="left:175.57px;top:320.58px;font-size:12.4px;color:#1a1a1a;width:142.17px;overflow:hidden;padding-bottom:4px;"><span style="display:inline-block;transform:scaleX(1.0180);transform-origin:0 50%;">8250936714</span></div>
<svg class="s" style="left:173px;top:317px;" width="5" height="5" viewBox="0 0 5 5"><path d="M0 0 H5 L0 5 Z" fill="#1e8a3e"/></svg>
<div class="t" style="right:820.09px;top:320.58px;font-size:12.4px;color:#1a1a1a;transform:scaleX(1.0192);transform-origin:100% 50%;">2017-08-15</div>
<div class="t" style="left:465.91px;top:320.58px;font-size:12.4px;color:#1a1a1a;width:142.17px;overflow:hidden;padding-bottom:4px;"><span style="display:inline-block;transform:scaleX(1.0234);transform-origin:0 50%;">Tyler Dr, Downtown, TX 87541</span></div>
<div class="t" style="left:611.08px;top:320.58px;font-size:12.4px;color:#1a1a1a;width:142.17px;overflow:hidden;padding-bottom:4px;"><span style="display:inline-block;transform:scaleX(1.0180);transform-origin:0 50%;">87541</span></div>
<svg class="s" style="left:609px;top:317px;" width="5" height="5" viewBox="0 0 5 5"><path d="M0 0 H5 L0 5 Z" fill="#1e8a3e"/></svg>
<div class="t" style="left:756.25px;top:320.58px;font-size:12.4px;color:#1a1a1a;width:142.17px;overflow:hidden;padding-bottom:4px;"><span style="display:inline-block;transform:scaleX(1.0567);transform-origin:0 50%;">Downtown Office</span></div>
<div class="t" style="left:901.42px;top:320.58px;font-size:12.4px;color:#1a1a1a;width:142.17px;overflow:hidden;padding-bottom:4px;"><span style="display:inline-block;transform:scaleX(0.9703);transform-origin:0 50%;">Closed</span></div>
<div class="t" style="right:94.24px;top:320.58px;font-size:12.4px;color:#1a1a1a;transform:scaleX(1.0192);transform-origin:100% 50%;">2017-08-24</div>
<div class="t" style="left:1191.76px;top:320.58px;font-size:12.4px;color:#1a1a1a;width:67.04px;overflow:hidden;padding-bottom:4px;"><span style="display:inline-block;transform:scaleX(1.0099);transform-origin:0 50%;">Listing &amp; Buying</span></div>
<div class="r" style="left:0.00px;top:353.50px;width:1258.80px;height:1.00px;background:#d9d9d9;"></div>
<div class="t" style="left:-285.50px;width:600px;text-align:center;top:339.81px;font-size:11.8px;color:#5a5a5a;font-weight:400;">28</div>
<div class="r" style="left:172.57px;top:335.28px;width:1.00px;height:18.72px;background:#d9d9d9;"></div>
<div class="r" style="left:462.91px;top:335.28px;width:1.00px;height:18.72px;background:#d9d9d9;"></div>
<div class="r" style="left:608.08px;top:335.28px;width:1.00px;height:18.72px;background:#d9d9d9;"></div>
<div class="r" style="left:753.25px;top:335.28px;width:1.00px;height:18.72px;background:#d9d9d9;"></div>
<div class="r" style="left:898.42px;top:335.28px;width:1.00px;height:18.72px;background:#d9d9d9;"></div>
<div class="r" style="left:1188.76px;top:335.28px;width:1.00px;height:18.72px;background:#f4f4f4;"></div>
<div class="t" style="left:30.40px;top:339.30px;font-size:12.4px;color:#1a1a1a;width:142.17px;overflow:hidden;padding-bottom:4px;"><span style="display:inline-block;transform:scaleX(1.0137);transform-origin:0 50%;">678 Who Drive, What City, TX</span></div>
<div class="t" style="left:175.57px;top:339.30px;font-size:12.4px;color:#1a1a1a;width:142.17px;overflow:hidden;padding-bottom:4px;"><span style="display:inline-block;transform:scaleX(1.0180);transform-origin:0 50%;">54543657568</span></div>
<svg class="s" style="left:173px;top:336px;" width="5" height="5" viewBox="0 0 5 5"><path d="M0 0 H5 L0 5 Z" fill="#1e8a3e"/></svg>
<div class="t" style="right:820.09px;top:339.30px;font-size:12.4px;color:#1a1a1a;transform:scaleX(1.0192);transform-origin:100% 50%;">2017-08-23</div>
<div class="t" style="left:465.91px;top:339.30px;font-size:12.4px;color:#1a1a1a;width:142.17px;overflow:hidden;padding-bottom:4px;"><span style="display:inline-block;transform:scaleX(1.0157);transform-origin:0 50%;">Who Drive, What City, TX</span></div>
<div class="t" style="left:611.08px;top:339.30px;font-size:12.4px;color:#1a1a1a;width:142.17px;overflow:hidden;padding-bottom:4px;"><span style="display:inline-block;transform:scaleX(1.0180);transform-origin:0 50%;">55555</span></div>
<svg class="s" style="left:609px;top:336px;" width="5" height="5" viewBox="0 0 5 5"><path d="M0 0 H5 L0 5 Z" fill="#1e8a3e"/></svg>
<div class="t" style="left:756.25px;top:339.30px;font-size:12.4px;color:#1a1a1a;width:142.17px;overflow:hidden;padding-bottom:4px;"><span style="display:inline-block;transform:scaleX(1.0567);transform-origin:0 50%;">Downtown Office</span></div>
<div class="t" style="left:901.42px;top:339.30px;font-size:12.4px;color:#1a1a1a;width:142.17px;overflow:hidden;padding-bottom:4px;"><span style="display:inline-block;transform:scaleX(0.9703);transform-origin:0 50%;">Closed</span></div>
<div class="t" style="right:94.24px;top:339.30px;font-size:12.4px;color:#1a1a1a;transform:scaleX(1.0192);transform-origin:100% 50%;">2017-08-24</div>
<div class="t" style="left:1191.76px;top:339.30px;font-size:12.4px;color:#1a1a1a;width:67.04px;overflow:hidden;padding-bottom:4px;"><span style="display:inline-block;transform:scaleX(1.0053);transform-origin:0 50%;">Listing</span></div>
<div class="r" style="left:0.00px;top:372.22px;width:1258.80px;height:1.00px;background:#d9d9d9;"></div>
<div class="t" style="left:-285.50px;width:600px;text-align:center;top:358.53px;font-size:11.8px;color:#5a5a5a;font-weight:400;">29</div>
<div class="r" style="left:172.57px;top:354.00px;width:1.00px;height:18.72px;background:#d9d9d9;"></div>
<div class="r" style="left:462.91px;top:354.00px;width:1.00px;height:18.72px;background:#d9d9d9;"></div>
<div class="r" style="left:608.08px;top:354.00px;width:1.00px;height:18.72px;background:#d9d9d9;"></div>
<div class="r" style="left:753.25px;top:354.00px;width:1.00px;height:18.72px;background:#d9d9d9;"></div>
<div class="r" style="left:898.42px;top:354.00px;width:1.00px;height:18.72px;background:#d9d9d9;"></div>
<div class="r" style="left:1188.76px;top:354.00px;width:1.00px;height:18.72px;background:#f4f4f4;"></div>
<div class="t" style="left:30.40px;top:358.02px;font-size:12.4px;color:#1a1a1a;width:142.17px;overflow:hidden;padding-bottom:4px;"><span style="display:inline-block;transform:scaleX(0.9925);transform-origin:0 50%;">1234 Peach Drive</span></div>
<div class="t" style="left:175.57px;top:358.02px;font-size:12.4px;color:#1a1a1a;width:142.17px;overflow:hidden;padding-bottom:4px;"><span style="display:inline-block;transform:scaleX(1.0180);transform-origin:0 50%;">565465</span></div>
<svg class="s" style="left:173px;top:355px;" width="5" height="5" viewBox="0 0 5 5"><path d="M0 0 H5 L0 5 Z" fill="#1e8a3e"/></svg>
<div class="t" style="right:820.09px;top:358.02px;font-size:12.4px;color:#1a1a1a;transform:scaleX(1.0192);transform-origin:100% 50%;">2017-08-29</div>
<div class="t" style="left:465.91px;top:358.02px;font-size:12.4px;color:#1a1a1a;width:287.34px;overflow:hidden;padding-bottom:4px;"><span style="display:inline-block;transform:scaleX(0.9864);transform-origin:0 50%;">Peach Drive</span></div>
<div class="t" style="left:756.25px;top:358.02px;font-size:12.4px;color:#1a1a1a;width:142.17px;overflow:hidden;padding-bottom:4px;"><span style="display:inline-block;transform:scaleX(1.0567);transform-origin:0 50%;">Downtown Office</span></div>
<div class="t" style="left:901.42px;top:358.02px;font-size:12.4px;color:#1a1a1a;width:142.17px;overflow:hidden;padding-bottom:4px;"><span style="display:inline-block;transform:scaleX(1.0000);transform-origin:0 50%;">Deal Fell Through</span></div>
<div class="t" style="right:94.24px;top:358.02px;font-size:12.4px;color:#1a1a1a;transform:scaleX(1.0192);transform-origin:100% 50%;">2017-08-29</div>
<div class="t" style="left:1191.76px;top:358.02px;font-size:12.4px;color:#1a1a1a;width:67.04px;overflow:hidden;padding-bottom:4px;"><span style="display:inline-block;transform:scaleX(1.0053);transform-origin:0 50%;">Listing</span></div>
<div class="r" style="left:0.00px;top:390.94px;width:1258.80px;height:1.00px;background:#d9d9d9;"></div>
<div class="t" style="left:-285.50px;width:600px;text-align:center;top:377.25px;font-size:11.8px;color:#5a5a5a;font-weight:400;">30</div>
<div class="r" style="left:172.57px;top:372.72px;width:1.00px;height:18.72px;background:#d9d9d9;"></div>
<div class="r" style="left:462.91px;top:372.72px;width:1.00px;height:18.72px;background:#d9d9d9;"></div>
<div class="r" style="left:608.08px;top:372.72px;width:1.00px;height:18.72px;background:#d9d9d9;"></div>
<div class="r" style="left:753.25px;top:372.72px;width:1.00px;height:18.72px;background:#d9d9d9;"></div>
<div class="r" style="left:898.42px;top:372.72px;width:1.00px;height:18.72px;background:#d9d9d9;"></div>
<div class="r" style="left:1188.76px;top:372.72px;width:1.00px;height:18.72px;background:#f4f4f4;"></div>
<div class="t" style="left:30.40px;top:376.74px;font-size:12.4px;color:#1a1a1a;width:142.17px;overflow:hidden;padding-bottom:4px;"><span style="display:inline-block;transform:scaleX(1.0160);transform-origin:0 50%;">987 Who Street, What City, TX</span></div>
<div class="t" style="left:175.57px;top:376.74px;font-size:12.4px;color:#1a1a1a;width:142.17px;overflow:hidden;padding-bottom:4px;"><span style="display:inline-block;transform:scaleX(1.0180);transform-origin:0 50%;">87463395</span></div>
<svg class="s" style="left:173px;top:373px;" width="5" height="5" viewBox="0 0 5 5"><path d="M0 0 H5 L0 5 Z" fill="#1e8a3e"/></svg>
<div class="t" style="right:820.09px;top:376.74px;font-size:12.4px;color:#1a1a1a;transform:scaleX(1.0192);transform-origin:100% 50%;">2017-09-01</div>
<div class="t" style="left:465.91px;top:376.74px;font-size:12.4px;color:#1a1a1a;width:142.17px;overflow:hidden;padding-bottom:4px;"><span style="display:inline-block;transform:scaleX(1.0161);transform-origin:0 50%;">Who Street, What City, TX 87655</span></div>
<div class="t" style="left:611.08px;top:376.74px;font-size:12.4px;color:#1a1a1a;width:142.17px;overflow:hidden;padding-bottom:4px;"><span style="display:inline-block;transform:scaleX(1.0180);transform-origin:0 50%;">87655</span></div>
<svg class="s" style="left:609px;top:373px;" width="5" height="5" viewBox="0 0 5 5"><path d="M0 0 H5 L0 5 Z" fill="#1e8a3e"/></svg>
<div class="t" style="left:756.25px;top:376.74px;font-size:12.4px;color:#1a1a1a;width:142.17px;overflow:hidden;padding-bottom:4px;"><span style="display:inline-block;transform:scaleX(1.0567);transform-origin:0 50%;">Downtown Office</span></div>
<div class="t" style="left:901.42px;top:376.74px;font-size:12.4px;color:#1a1a1a;width:142.17px;overflow:hidden;padding-bottom:4px;"><span style="display:inline-block;transform:scaleX(1.0015);transform-origin:0 50%;">Pending</span></div>
<div class="t" style="right:94.24px;top:376.74px;font-size:12.4px;color:#1a1a1a;transform:scaleX(1.0192);transform-origin:100% 50%;">2017-09-01</div>
<div class="t" style="left:1191.76px;top:376.74px;font-size:12.4px;color:#1a1a1a;width:67.04px;overflow:hidden;padding-bottom:4px;"><span style="display:inline-block;transform:scaleX(1.0053);transform-origin:0 50%;">Listing</span></div>
<div class="r" style="left:0.00px;top:409.66px;width:1258.80px;height:1.00px;background:#d9d9d9;"></div>
<div class="t" style="left:-285.50px;width:600px;text-align:center;top:395.97px;font-size:11.8px;color:#5a5a5a;font-weight:400;">31</div>
<div class="r" style="left:172.57px;top:391.44px;width:1.00px;height:18.72px;background:#d9d9d9;"></div>
<div class="r" style="left:462.91px;top:391.44px;width:1.00px;height:18.72px;background:#d9d9d9;"></div>
<div class="r" style="left:608.08px;top:391.44px;width:1.00px;height:18.72px;background:#d9d9d9;"></div>
<div class="r" style="left:753.25px;top:391.44px;width:1.00px;height:18.72px;background:#d9d9d9;"></div>
<div class="r" style="left:898.42px;top:391.44px;width:1.00px;height:18.72px;background:#d9d9d9;"></div>
<div class="r" style="left:1188.76px;top:391.44px;width:1.00px;height:18.72px;background:#f4f4f4;"></div>
<div class="t" style="left:30.40px;top:395.46px;font-size:12.4px;color:#1a1a1a;width:142.17px;overflow:hidden;padding-bottom:4px;"><span style="display:inline-block;transform:scaleX(0.9863);transform-origin:0 50%;">7766 Kirby Drive, Dallas TX</span></div>
<div class="t" style="left:175.57px;top:395.46px;font-size:12.4px;color:#1a1a1a;width:142.17px;overflow:hidden;padding-bottom:4px;"><span style="display:inline-block;transform:scaleX(1.0180);transform-origin:0 50%;">78675633</span></div>
<svg class="s" style="left:173px;top:392px;" width="5" height="5" viewBox="0 0 5 5"><path d="M0 0 H5 L0 5 Z" fill="#1e8a3e"/></svg>
<div class="t" style="right:820.09px;top:395.46px;font-size:12.4px;color:#1a1a1a;transform:scaleX(1.0192);transform-origin:100% 50%;">2017-09-08</div>
<div class="t" style="left:465.91px;top:395.46px;font-size:12.4px;color:#1a1a1a;width:142.17px;overflow:hidden;padding-bottom:4px;"><span style="display:inline-block;transform:scaleX(0.9880);transform-origin:0 50%;">Kirby Drive, Dallas TX, 87655</span></div>
<div class="t" style="left:611.08px;top:395.46px;font-size:12.4px;color:#1a1a1a;width:142.17px;overflow:hidden;padding-bottom:4px;"><span style="display:inline-block;transform:scaleX(1.0180);transform-origin:0 50%;">87655</span></div>
<svg class="s" style="left:609px;top:392px;" width="5" height="5" viewBox="0 0 5 5"><path d="M0 0 H5 L0 5 Z" fill="#1e8a3e"/></svg>
<div class="t" style="left:756.25px;top:395.46px;font-size:12.4px;color:#1a1a1a;width:142.17px;overflow:hidden;padding-bottom:4px;"><span style="display:inline-block;transform:scaleX(1.0567);transform-origin:0 50%;">Downtown Office</span></div>
<div class="t" style="left:901.42px;top:395.46px;font-size:12.4px;color:#1a1a1a;width:142.17px;overflow:hidden;padding-bottom:4px;"><span style="display:inline-block;transform:scaleX(0.9703);transform-origin:0 50%;">Closed</span></div>
<div class="t" style="right:94.24px;top:395.46px;font-size:12.4px;color:#1a1a1a;transform:scaleX(1.0192);transform-origin:100% 50%;">2017-09-12</div>
<div class="t" style="left:1191.76px;top:395.46px;font-size:12.4px;color:#1a1a1a;width:67.04px;overflow:hidden;padding-bottom:4px;"><span style="display:inline-block;transform:scaleX(1.0037);transform-origin:0 50%;">Buying</span></div>
<div class="r" style="left:0.00px;top:428.38px;width:1258.80px;height:1.00px;background:#d9d9d9;"></div>
<div class="t" style="left:-285.50px;width:600px;text-align:center;top:414.69px;font-size:11.8px;color:#5a5a5a;font-weight:400;">32</div>
<div class="r" style="left:172.57px;top:410.16px;width:1.00px;height:18.72px;background:#d9d9d9;"></div>
<div class="r" style="left:462.91px;top:410.16px;width:1.00px;height:18.72px;background:#d9d9d9;"></div>
<div class="r" style="left:753.25px;top:410.16px;width:1.00px;height:18.72px;background:#d9d9d9;"></div>
<div class="r" style="left:898.42px;top:410.16px;width:1.00px;height:18.72px;background:#d9d9d9;"></div>
<div class="r" style="left:1188.76px;top:410.16px;width:1.00px;height:18.72px;background:#f4f4f4;"></div>
<div class="t" style="left:30.40px;top:414.18px;font-size:12.4px;color:#1a1a1a;width:142.17px;overflow:hidden;padding-bottom:4px;"><span style="display:inline-block;transform:scaleX(1.0160);transform-origin:0 50%;">987 Who Street, What City, TX</span></div>
<div class="t" style="left:175.57px;top:414.18px;font-size:12.4px;color:#1a1a1a;width:142.17px;overflow:hidden;padding-bottom:4px;"><span style="display:inline-block;transform:scaleX(1.0180);transform-origin:0 50%;">87463395</span></div>
<svg class="s" style="left:173px;top:411px;" width="5" height="5" viewBox="0 0 5 5"><path d="M0 0 H5 L0 5 Z" fill="#1e8a3e"/></svg>
<div class="t" style="right:820.09px;top:414.18px;font-size:12.4px;color:#1a1a1a;transform:scaleX(1.0192);transform-origin:100% 50%;">2017-09-18</div>
<div class="t" style="left:465.91px;top:414.18px;font-size:12.4px;color:#1a1a1a;width:287.34px;overflow:hidden;padding-bottom:4px;"><span style="display:inline-block;transform:scaleX(1.0139);transform-origin:0 50%;">Who Street, What City, TX 87655 (#2)</span></div>
<div class="t" style="left:756.25px;top:414.18px;font-size:12.4px;color:#1a1a1a;width:142.17px;overflow:hidden;padding-bottom:4px;"><span style="display:inline-block;transform:scaleX(1.0567);transform-origin:0 50%;">Downtown Office</span></div>
<div class="t" style="left:901.42px;top:414.18px;font-size:12.4px;color:#1a1a1a;width:142.17px;overflow:hidden;padding-bottom:4px;"><span style="display:inline-block;transform:scaleX(1.0015);transform-origin:0 50%;">Pending</span></div>
<div class="t" style="right:94.24px;top:414.18px;font-size:12.4px;color:#1a1a1a;transform:scaleX(1.0192);transform-origin:100% 50%;">2017-09-01</div>
<div class="t" style="left:1191.76px;top:414.18px;font-size:12.4px;color:#1a1a1a;width:67.04px;overflow:hidden;padding-bottom:4px;"><span style="display:inline-block;transform:scaleX(1.0099);transform-origin:0 50%;">Listing &amp; Buying</span></div>
<div class="r" style="left:0.00px;top:447.10px;width:1258.80px;height:1.00px;background:#d9d9d9;"></div>
<div class="t" style="left:-285.50px;width:600px;text-align:center;top:433.41px;font-size:11.8px;color:#5a5a5a;font-weight:400;">33</div>
<div class="r" style="left:172.57px;top:428.88px;width:1.00px;height:18.72px;background:#d9d9d9;"></div>
<div class="r" style="left:462.91px;top:428.88px;width:1.00px;height:18.72px;background:#d9d9d9;"></div>
<div class="r" style="left:753.25px;top:428.88px;width:1.00px;height:18.72px;background:#d9d9d9;"></div>
<div class="r" style="left:898.42px;top:428.88px;width:1.00px;height:18.72px;background:#d9d9d9;"></div>
<div class="r" style="left:1188.76px;top:428.88px;width:1.00px;height:18.72px;background:#f4f4f4;"></div>
<div class="t" style="left:30.40px;top:432.90px;font-size:12.4px;color:#1a1a1a;width:142.17px;overflow:hidden;padding-bottom:4px;"><span style="display:inline-block;transform:scaleX(1.0236);transform-origin:0 50%;">568 84th Place, Flower Mound</span></div>
<div class="t" style="left:175.57px;top:432.90px;font-size:12.4px;color:#1a1a1a;width:142.17px;overflow:hidden;padding-bottom:4px;"><span style="display:inline-block;transform:scaleX(1.0180);transform-origin:0 50%;">578842255</span></div>
<svg class="s" style="left:173px;top:429px;" width="5" height="5" viewBox="0 0 5 5"><path d="M0 0 H5 L0 5 Z" fill="#1e8a3e"/></svg>
<div class="t" style="right:820.09px;top:432.90px;font-size:12.4px;color:#1a1a1a;transform:scaleX(1.0192);transform-origin:100% 50%;">2017-09-26</div>
<div class="t" style="left:465.91px;top:432.90px;font-size:12.4px;color:#1a1a1a;width:287.34px;overflow:hidden;padding-bottom:4px;"><span style="display:inline-block;transform:scaleX(1.0096);transform-origin:0 50%;">84th Place, Flower Mound TX 75028 (#2)</span></div>
<div class="t" style="left:756.25px;top:432.90px;font-size:12.4px;color:#1a1a1a;width:142.17px;overflow:hidden;padding-bottom:4px;"><span style="display:inline-block;transform:scaleX(1.0567);transform-origin:0 50%;">Downtown Office</span></div>
<div class="t" style="left:901.42px;top:432.90px;font-size:12.4px;color:#1a1a1a;width:142.17px;overflow:hidden;padding-bottom:4px;"><span style="display:inline-block;transform:scaleX(1.0015);transform-origin:0 50%;">Pending</span></div>
<div class="t" style="right:94.24px;top:432.90px;font-size:12.4px;color:#1a1a1a;transform:scaleX(1.0192);transform-origin:100% 50%;">2017-09-26</div>
<div class="t" style="left:1191.76px;top:432.90px;font-size:12.4px;color:#1a1a1a;width:67.04px;overflow:hidden;padding-bottom:4px;"><span style="display:inline-block;transform:scaleX(1.0037);transform-origin:0 50%;">Buying</span></div>
<div class="r" style="left:0.00px;top:465.82px;width:1258.80px;height:1.00px;background:#d9d9d9;"></div>
<div class="t" style="left:-285.50px;width:600px;text-align:center;top:452.13px;font-size:11.8px;color:#5a5a5a;font-weight:400;">34</div>
<div class="r" style="left:172.57px;top:447.60px;width:1.00px;height:18.72px;background:#d9d9d9;"></div>
<div class="r" style="left:462.91px;top:447.60px;width:1.00px;height:18.72px;background:#d9d9d9;"></div>
<div class="r" style="left:753.25px;top:447.60px;width:1.00px;height:18.72px;background:#d9d9d9;"></div>
<div class="r" style="left:898.42px;top:447.60px;width:1.00px;height:18.72px;background:#d9d9d9;"></div>
<div class="r" style="left:1188.76px;top:447.60px;width:1.00px;height:18.72px;background:#f4f4f4;"></div>
<div class="t" style="left:30.40px;top:451.62px;font-size:12.4px;color:#1a1a1a;width:142.17px;overflow:hidden;padding-bottom:4px;"><span style="display:inline-block;transform:scaleX(1.0236);transform-origin:0 50%;">568 84th Place, Flower Mound</span></div>
<div class="t" style="left:175.57px;top:451.62px;font-size:12.4px;color:#1a1a1a;width:142.17px;overflow:hidden;padding-bottom:4px;"><span style="display:inline-block;transform:scaleX(1.0180);transform-origin:0 50%;">578842255</span></div>
<svg class="s" style="left:173px;top:448px;" width="5" height="5" viewBox="0 0 5 5"><path d="M0 0 H5 L0 5 Z" fill="#1e8a3e"/></svg>
<div class="t" style="right:820.09px;top:451.62px;font-size:12.4px;color:#1a1a1a;transform:scaleX(1.0192);transform-origin:100% 50%;">2017-09-26</div>
<div class="t" style="left:465.91px;top:451.62px;font-size:12.4px;color:#1a1a1a;width:287.34px;overflow:hidden;padding-bottom:4px;"><span style="display:inline-block;transform:scaleX(1.0056);transform-origin:0 50%;">84th Place, Flower Mound TX 75028 (Johnson)</span></div>
<div class="t" style="left:756.25px;top:451.62px;font-size:12.4px;color:#1a1a1a;width:142.17px;overflow:hidden;padding-bottom:4px;"><span style="display:inline-block;transform:scaleX(1.0567);transform-origin:0 50%;">Downtown Office</span></div>
<div class="t" style="left:901.42px;top:451.62px;font-size:12.4px;color:#1a1a1a;width:142.17px;overflow:hidden;padding-bottom:4px;"><span style="display:inline-block;transform:scaleX(1.0015);transform-origin:0 50%;">Pending</span></div>
<div class="t" style="right:94.24px;top:451.62px;font-size:12.4px;color:#1a1a1a;transform:scaleX(1.0192);transform-origin:100% 50%;">2017-09-26</div>
<div class="t" style="left:1191.76px;top:451.62px;font-size:12.4px;color:#1a1a1a;width:67.04px;overflow:hidden;padding-bottom:4px;"><span style="display:inline-block;transform:scaleX(1.0053);transform-origin:0 50%;">Listing</span></div>
<div class="r" style="left:0.00px;top:484.54px;width:1258.80px;height:1.00px;background:#d9d9d9;"></div>
<div class="t" style="left:-285.50px;width:600px;text-align:center;top:470.85px;font-size:11.8px;color:#5a5a5a;font-weight:400;">35</div>
<div class="r" style="left:172.57px;top:466.32px;width:1.00px;height:18.72px;background:#d9d9d9;"></div>
<div class="r" style="left:462.91px;top:466.32px;width:1.00px;height:18.72px;background:#d9d9d9;"></div>
<div class="r" style="left:753.25px;top:466.32px;width:1.00px;height:18.72px;background:#d9d9d9;"></div>
<div class="r" style="left:898.42px;top:466.32px;width:1.00px;height:18.72px;background:#d9d9d9;"></div>
<div class="r" style="left:1188.76px;top:466.32px;width:1.00px;height:18.72px;background:#f4f4f4;"></div>
<div class="t" style="left:30.40px;top:470.34px;font-size:12.4px;color:#1a1a1a;width:142.17px;overflow:hidden;padding-bottom:4px;"><span style="display:inline-block;transform:scaleX(1.0160);transform-origin:0 50%;">987 Who Street, What City, TX</span></div>
<div class="t" style="left:175.57px;top:470.34px;font-size:12.4px;color:#1a1a1a;width:142.17px;overflow:hidden;padding-bottom:4px;"><span style="display:inline-block;transform:scaleX(1.0180);transform-origin:0 50%;">87463395</span></div>
<svg class="s" style="left:173px;top:467px;" width="5" height="5" viewBox="0 0 5 5"><path d="M0 0 H5 L0 5 Z" fill="#1e8a3e"/></svg>
<div class="t" style="right:820.09px;top:470.34px;font-size:12.4px;color:#1a1a1a;transform:scaleX(1.0342);transform-origin:100% 50%;">2017-10-11</div>
<div class="t" style="left:465.91px;top:470.34px;font-size:12.4px;color:#1a1a1a;width:287.34px;overflow:hidden;padding-bottom:4px;"><span style="display:inline-block;transform:scaleX(1.0139);transform-origin:0 50%;">Who Street, What City, TX 87655 (#3)</span></div>
<div class="t" style="left:756.25px;top:470.34px;font-size:12.4px;color:#1a1a1a;width:142.17px;overflow:hidden;padding-bottom:4px;"><span style="display:inline-block;transform:scaleX(1.0567);transform-origin:0 50%;">Downtown Office</span></div>
<div class="t" style="left:901.42px;top:470.34px;font-size:12.4px;color:#1a1a1a;width:142.17px;overflow:hidden;padding-bottom:4px;"><span style="display:inline-block;transform:scaleX(1.0015);transform-origin:0 50%;">Pending</span></div>
<div class="t" style="right:94.24px;top:470.34px;font-size:12.4px;color:#1a1a1a;transform:scaleX(1.0192);transform-origin:100% 50%;">2017-09-01</div>
<div class="t" style="left:1191.76px;top:470.34px;font-size:12.4px;color:#1a1a1a;width:67.04px;overflow:hidden;padding-bottom:4px;"><span style="display:inline-block;transform:scaleX(1.0053);transform-origin:0 50%;">Listing</span></div>
<div class="r" style="left:0.00px;top:503.26px;width:1258.80px;height:1.00px;background:#d9d9d9;"></div>
<div class="t" style="left:-285.50px;width:600px;text-align:center;top:489.57px;font-size:11.8px;color:#5a5a5a;font-weight:400;">36</div>
<div class="r" style="left:172.57px;top:485.04px;width:1.00px;height:18.72px;background:#d9d9d9;"></div>
<div class="r" style="left:462.91px;top:485.04px;width:1.00px;height:18.72px;background:#d9d9d9;"></div>
<div class="r" style="left:608.08px;top:485.04px;width:1.00px;height:18.72px;background:#d9d9d9;"></div>
<div class="r" style="left:753.25px;top:485.04px;width:1.00px;height:18.72px;background:#d9d9d9;"></div>
<div class="r" style="left:898.42px;top:485.04px;width:1.00px;height:18.72px;background:#d9d9d9;"></div>
<div class="r" style="left:1188.76px;top:485.04px;width:1.00px;height:18.72px;background:#f4f4f4;"></div>
<div class="t" style="left:30.40px;top:489.06px;font-size:12.4px;color:#1a1a1a;width:142.17px;overflow:hidden;padding-bottom:4px;"><span style="display:inline-block;transform:scaleX(0.9961);transform-origin:0 50%;">1002CL Test Drive</span></div>
<div class="t" style="left:175.57px;top:489.06px;font-size:12.4px;color:#1a1a1a;width:142.17px;overflow:hidden;padding-bottom:4px;"><span style="display:inline-block;transform:scaleX(1.0180);transform-origin:0 50%;">623562356292</span></div>
<svg class="s" style="left:173px;top:486px;" width="5" height="5" viewBox="0 0 5 5"><path d="M0 0 H5 L0 5 Z" fill="#1e8a3e"/></svg>
<div class="t" style="right:820.09px;top:489.06px;font-size:12.4px;color:#1a1a1a;transform:scaleX(1.0192);transform-origin:100% 50%;">2017-06-29</div>
<div class="t" style="left:465.91px;top:489.06px;font-size:12.4px;color:#1a1a1a;width:287.34px;overflow:hidden;padding-bottom:4px;"><span style="display:inline-block;transform:scaleX(1.0251);transform-origin:0 50%;">Test Drive</span></div>
<div class="t" style="left:756.25px;top:489.06px;font-size:12.4px;color:#1a1a1a;width:142.17px;overflow:hidden;padding-bottom:4px;"><span style="display:inline-block;transform:scaleX(1.0405);transform-origin:0 50%;">North Park office</span></div>
<div class="t" style="left:901.42px;top:489.06px;font-size:12.4px;color:#1a1a1a;width:142.17px;overflow:hidden;padding-bottom:4px;"><span style="display:inline-block;transform:scaleX(0.9703);transform-origin:0 50%;">Closed</span></div>
<div class="t" style="right:94.24px;top:489.06px;font-size:12.4px;color:#1a1a1a;transform:scaleX(1.0192);transform-origin:100% 50%;">2017-08-14</div>
<div class="t" style="left:1191.76px;top:489.06px;font-size:12.4px;color:#1a1a1a;width:67.04px;overflow:hidden;padding-bottom:4px;"><span style="display:inline-block;transform:scaleX(1.0053);transform-origin:0 50%;">Listing</span></div>
<div class="r" style="left:0.00px;top:521.98px;width:1258.80px;height:1.00px;background:#d9d9d9;"></div>
<div class="t" style="left:-285.50px;width:600px;text-align:center;top:508.29px;font-size:11.8px;color:#5a5a5a;font-weight:400;">37</div>
<div class="r" style="left:172.57px;top:503.76px;width:1.00px;height:18.72px;background:#d9d9d9;"></div>
<div class="r" style="left:462.91px;top:503.76px;width:1.00px;height:18.72px;background:#d9d9d9;"></div>
<div class="r" style="left:608.08px;top:503.76px;width:1.00px;height:18.72px;background:#d9d9d9;"></div>
<div class="r" style="left:753.25px;top:503.76px;width:1.00px;height:18.72px;background:#d9d9d9;"></div>
<div class="r" style="left:898.42px;top:503.76px;width:1.00px;height:18.72px;background:#d9d9d9;"></div>
<div class="r" style="left:1188.76px;top:503.76px;width:1.00px;height:18.72px;background:#f4f4f4;"></div>
<div class="t" style="left:30.40px;top:507.78px;font-size:12.4px;color:#1a1a1a;width:142.17px;overflow:hidden;padding-bottom:4px;"><span style="display:inline-block;transform:scaleX(1.0211);transform-origin:0 50%;">6234 West Cedar Street, North</span></div>
<div class="t" style="left:175.57px;top:507.78px;font-size:12.4px;color:#1a1a1a;width:142.17px;overflow:hidden;padding-bottom:4px;"><span style="display:inline-block;transform:scaleX(1.0180);transform-origin:0 50%;">56463232525</span></div>
<svg class="s" style="left:173px;top:504px;" width="5" height="5" viewBox="0 0 5 5"><path d="M0 0 H5 L0 5 Z" fill="#1e8a3e"/></svg>
<div class="t" style="right:820.09px;top:507.78px;font-size:12.4px;color:#1a1a1a;transform:scaleX(1.0342);transform-origin:100% 50%;">2017-11-15</div>
<div class="t" style="left:465.91px;top:507.78px;font-size:12.4px;color:#1a1a1a;width:142.17px;overflow:hidden;padding-bottom:4px;"><span style="display:inline-block;transform:scaleX(1.0149);transform-origin:0 50%;">West Cedar Street, North Park</span></div>
<div class="t" style="left:611.08px;top:507.78px;font-size:12.4px;color:#1a1a1a;width:142.17px;overflow:hidden;padding-bottom:4px;"><span style="display:inline-block;transform:scaleX(1.0180);transform-origin:0 50%;">55555</span></div>
<svg class="s" style="left:609px;top:504px;" width="5" height="5" viewBox="0 0 5 5"><path d="M0 0 H5 L0 5 Z" fill="#1e8a3e"/></svg>
<div class="t" style="left:756.25px;top:507.78px;font-size:12.4px;color:#1a1a1a;width:142.17px;overflow:hidden;padding-bottom:4px;"><span style="display:inline-block;transform:scaleX(1.0405);transform-origin:0 50%;">North Park office</span></div>
<div class="t" style="left:901.42px;top:507.78px;font-size:12.4px;color:#1a1a1a;width:142.17px;overflow:hidden;padding-bottom:4px;"><span style="display:inline-block;transform:scaleX(1.0042);transform-origin:0 50%;">Listed</span></div>
<div class="t" style="right:94.24px;top:507.78px;font-size:12.4px;color:#1a1a1a;transform:scaleX(1.0342);transform-origin:100% 50%;">2017-11-15</div>
<div class="t" style="left:1191.76px;top:507.78px;font-size:12.4px;color:#1a1a1a;width:67.04px;overflow:hidden;padding-bottom:4px;"><span style="display:inline-block;transform:scaleX(1.0053);transform-origin:0 50%;">Listing</span></div>
<div class="r" style="left:0.00px;top:540.70px;width:1258.80px;height:1.00px;background:#d9d9d9;"></div>
<div class="t" style="left:-285.50px;width:600px;text-align:center;top:527.01px;font-size:11.8px;color:#5a5a5a;font-weight:400;">38</div>
<div class="r" style="left:172.57px;top:522.48px;width:1.00px;height:18.72px;background:#d9d9d9;"></div>
<div class="r" style="left:462.91px;top:522.48px;width:1.00px;height:18.72px;background:#d9d9d9;"></div>
<div class="r" style="left:608.08px;top:522.48px;width:1.00px;height:18.72px;background:#d9d9d9;"></div>
<div class="r" style="left:753.25px;top:522.48px;width:1.00px;height:18.72px;background:#d9d9d9;"></div>
<div class="r" style="left:898.42px;top:522.48px;width:1.00px;height:18.72px;background:#d9d9d9;"></div>
<div class="r" style="left:1188.76px;top:522.48px;width:1.00px;height:18.72px;background:#f4f4f4;"></div>
<div class="t" style="left:30.40px;top:526.50px;font-size:12.4px;color:#1a1a1a;width:287.34px;overflow:hidden;padding-bottom:4px;"><span style="display:inline-block;transform:scaleX(1.0165);transform-origin:0 50%;">1650 Broadway</span></div>
<div class="t" style="right:820.09px;top:526.50px;font-size:12.4px;color:#1a1a1a;transform:scaleX(1.0192);transform-origin:100% 50%;">2017-06-15</div>
<div class="t" style="left:465.91px;top:526.50px;font-size:12.4px;color:#1a1a1a;width:287.34px;overflow:hidden;padding-bottom:4px;"><span style="display:inline-block;transform:scaleX(1.0225);transform-origin:0 50%;">Broadway</span></div>
<div class="t" style="left:756.25px;top:526.50px;font-size:12.4px;color:#1a1a1a;width:142.17px;overflow:hidden;padding-bottom:4px;"><span style="display:inline-block;transform:scaleX(0.9605);transform-origin:0 50%;">San Francisco</span></div>
<div class="t" style="left:901.42px;top:526.50px;font-size:12.4px;color:#1a1a1a;width:142.17px;overflow:hidden;padding-bottom:4px;"><span style="display:inline-block;transform:scaleX(1.0015);transform-origin:0 50%;">Pending</span></div>
<div class="t" style="right:94.24px;top:526.50px;font-size:12.4px;color:#1a1a1a;transform:scaleX(1.0192);transform-origin:100% 50%;">2017-12-13</div>
<div class="t" style="left:1191.76px;top:526.50px;font-size:12.4px;color:#1a1a1a;width:67.04px;overflow:hidden;padding-bottom:4px;"><span style="display:inline-block;transform:scaleX(1.0037);transform-origin:0 50%;">Buying</span></div>
<div class="r" style="left:0.00px;top:559.42px;width:1258.80px;height:1.00px;background:#d9d9d9;"></div>
<div class="t" style="left:-285.50px;width:600px;text-align:center;top:545.73px;font-size:11.8px;color:#5a5a5a;font-weight:400;">39</div>
<div class="r" style="left:172.57px;top:541.20px;width:1.00px;height:18.72px;background:#d9d9d9;"></div>
<div class="r" style="left:462.91px;top:541.20px;width:1.00px;height:18.72px;background:#d9d9d9;"></div>
<div class="r" style="left:608.08px;top:541.20px;width:1.00px;height:18.72px;background:#d9d9d9;"></div>
<div class="r" style="left:753.25px;top:541.20px;width:1.00px;height:18.72px;background:#d9d9d9;"></div>
<div class="r" style="left:898.42px;top:541.20px;width:1.00px;height:18.72px;background:#d9d9d9;"></div>
<div class="r" style="left:1188.76px;top:541.20px;width:1.00px;height:18.72px;background:#f4f4f4;"></div>
<div class="t" style="left:30.40px;top:545.22px;font-size:12.4px;color:#1a1a1a;width:287.34px;overflow:hidden;padding-bottom:4px;"><span style="display:inline-block;transform:scaleX(0.9930);transform-origin:0 50%;">25 Clay Street</span></div>
<div class="t" style="right:820.09px;top:545.22px;font-size:12.4px;color:#1a1a1a;transform:scaleX(1.0192);transform-origin:100% 50%;">2017-06-29</div>
<div class="t" style="left:465.91px;top:545.22px;font-size:12.4px;color:#1a1a1a;width:287.34px;overflow:hidden;padding-bottom:4px;"><span style="display:inline-block;transform:scaleX(0.9922);transform-origin:0 50%;">Clay Street</span></div>
<div class="t" style="left:756.25px;top:545.22px;font-size:12.4px;color:#1a1a1a;width:142.17px;overflow:hidden;padding-bottom:4px;"><span style="display:inline-block;transform:scaleX(0.9605);transform-origin:0 50%;">San Francisco</span></div>
<div class="t" style="left:901.42px;top:545.22px;font-size:12.4px;color:#1a1a1a;width:142.17px;overflow:hidden;padding-bottom:4px;"><span style="display:inline-block;transform:scaleX(0.9703);transform-origin:0 50%;">Closed</span></div>
<div class="t" style="right:94.24px;top:545.22px;font-size:12.4px;color:#1a1a1a;transform:scaleX(1.0192);transform-origin:100% 50%;">2017-12-12</div>
<div class="t" style="left:1191.76px;top:545.22px;font-size:12.4px;color:#1a1a1a;width:67.04px;overflow:hidden;padding-bottom:4px;"><span style="display:inline-block;transform:scaleX(1.0053);transform-origin:0 50%;">Listing</span></div>
<div class="r" style="left:0.00px;top:578.14px;width:1258.80px;height:1.00px;background:#d9d9d9;"></div>
<div class="t" style="left:-285.50px;width:600px;text-align:center;top:564.45px;font-size:11.8px;color:#5a5a5a;font-weight:400;">40</div>
<div class="r" style="left:172.57px;top:559.92px;width:1.00px;height:18.72px;background:#d9d9d9;"></div>
<div class="r" style="left:462.91px;top:559.92px;width:1.00px;height:18.72px;background:#d9d9d9;"></div>
<div class="r" style="left:608.08px;top:559.92px;width:1.00px;height:18.72px;background:#d9d9d9;"></div>
<div class="r" style="left:753.25px;top:559.92px;width:1.00px;height:18.72px;background:#d9d9d9;"></div>
<div class="r" style="left:898.42px;top:559.92px;width:1.00px;height:18.72px;background:#d9d9d9;"></div>
<div class="r" style="left:1188.76px;top:559.92px;width:1.00px;height:18.72px;background:#f4f4f4;"></div>
<div class="t" style="left:30.40px;top:563.94px;font-size:12.4px;color:#1a1a1a;width:287.34px;overflow:hidden;padding-bottom:4px;"><span style="display:inline-block;transform:scaleX(1.0364);transform-origin:0 50%;">1647 Trenton Way</span></div>
<div class="t" style="right:820.09px;top:563.94px;font-size:12.4px;color:#1a1a1a;transform:scaleX(1.0192);transform-origin:100% 50%;">2017-10-03</div>
<div class="t" style="left:465.91px;top:563.94px;font-size:12.4px;color:#1a1a1a;width:287.34px;overflow:hidden;padding-bottom:4px;"><span style="display:inline-block;transform:scaleX(1.0466);transform-origin:0 50%;">Trenton Way</span></div>
<div class="t" style="left:756.25px;top:563.94px;font-size:12.4px;color:#1a1a1a;width:142.17px;overflow:hidden;padding-bottom:4px;"><span style="display:inline-block;transform:scaleX(0.9605);transform-origin:0 50%;">San Francisco</span></div>
<div class="t" style="left:901.42px;top:563.94px;font-size:12.4px;color:#1a1a1a;width:142.17px;overflow:hidden;padding-bottom:4px;"><span style="display:inline-block;transform:scaleX(0.9703);transform-origin:0 50%;">Closed</span></div>
<div class="t" style="right:94.24px;top:563.94px;font-size:12.4px;color:#1a1a1a;transform:scaleX(1.0342);transform-origin:100% 50%;">2017-11-29</div>
<div class="t" style="left:1191.76px;top:563.94px;font-size:12.4px;color:#1a1a1a;width:67.04px;overflow:hidden;padding-bottom:4px;"><span style="display:inline-block;transform:scaleX(1.0037);transform-origin:0 50%;">Buying</span></div>
<div class="r" style="left:0.00px;top:596.86px;width:1258.80px;height:1.00px;background:#d9d9d9;"></div>
<div class="t" style="left:-285.50px;width:600px;text-align:center;top:583.17px;font-size:11.8px;color:#5a5a5a;font-weight:400;">41</div>
<div class="r" style="left:462.91px;top:578.64px;width:1.00px;height:18.72px;background:#d9d9d9;"></div>
<div class="r" style="left:753.25px;top:578.64px;width:1.00px;height:18.72px;background:#d9d9d9;"></div>
<div class="r" style="left:898.42px;top:578.64px;width:1.00px;height:18.72px;background:#d9d9d9;"></div>
<div class="r" style="left:1188.76px;top:578.64px;width:1.00px;height:18.72px;background:#f4f4f4;"></div>
<div class="t" style="left:30.40px;top:582.66px;font-size:12.4px;color:#1a1a1a;width:287.34px;overflow:hidden;padding-bottom:4px;"><span style="display:inline-block;transform:scaleX(1.0187);transform-origin:0 50%;">1 Wayne Manor, Gotham City, USA</span></div>
<div class="t" style="right:820.09px;top:582.66px;font-size:12.4px;color:#1a1a1a;transform:scaleX(1.0342);transform-origin:100% 50%;">2017-11-16</div>
<div class="t" style="left:465.91px;top:582.66px;font-size:12.4px;color:#1a1a1a;width:287.34px;overflow:hidden;padding-bottom:4px;"><span style="display:inline-block;transform:scaleX(1.0208);transform-origin:0 50%;">Wayne Manor, Gotham City, USA</span></div>
<div class="t" style="left:756.25px;top:582.66px;font-size:12.4px;color:#1a1a1a;width:142.17px;overflow:hidden;padding-bottom:4px;"><span style="display:inline-block;transform:scaleX(0.9605);transform-origin:0 50%;">San Francisco</span></div>
<div class="t" style="left:901.42px;top:582.66px;font-size:12.4px;color:#1a1a1a;width:142.17px;overflow:hidden;padding-bottom:4px;"><span style="display:inline-block;transform:scaleX(1.0042);transform-origin:0 50%;">Listed</span></div>
<div class="t" style="right:94.24px;top:582.66px;font-size:12.4px;color:#1a1a1a;transform:scaleX(1.0342);transform-origin:100% 50%;">2017-11-16</div>
<div class="t" style="left:1191.76px;top:582.66px;font-size:12.4px;color:#1a1a1a;width:67.04px;overflow:hidden;padding-bottom:4px;"><span style="display:inline-block;transform:scaleX(1.0053);transform-origin:0 50%;">Listing</span></div>
<div class="r" style="left:0.00px;top:615.58px;width:1258.80px;height:1.00px;background:#d9d9d9;"></div>
<div class="t" style="left:-285.50px;width:600px;text-align:center;top:601.89px;font-size:11.8px;color:#5a5a5a;font-weight:400;">42</div>
<div class="r" style="left:172.57px;top:597.36px;width:1.00px;height:18.72px;background:#d9d9d9;"></div>
<div class="r" style="left:462.91px;top:597.36px;width:1.00px;height:18.72px;background:#d9d9d9;"></div>
<div class="r" style="left:608.08px;top:597.36px;width:1.00px;height:18.72px;background:#d9d9d9;"></div>
<div class="r" style="left:753.25px;top:597.36px;width:1.00px;height:18.72px;background:#d9d9d9;"></div>
<div class="r" style="left:898.42px;top:597.36px;width:1.00px;height:18.72px;background:#d9d9d9;"></div>
<div class="r" style="left:1188.76px;top:597.36px;width:1.00px;height:18.72px;background:#f4f4f4;"></div>
<div class="t" style="left:30.40px;top:601.38px;font-size:12.4px;color:#1a1a1a;width:287.34px;overflow:hidden;padding-bottom:4px;"><span style="display:inline-block;transform:scaleX(1.0020);transform-origin:0 50%;">1600 Pennsylvania Ave</span></div>
<div class="t" style="right:820.09px;top:601.38px;font-size:12.4px;color:#1a1a1a;transform:scaleX(1.0192);transform-origin:100% 50%;">2017-12-12</div>
<div class="t" style="left:465.91px;top:601.38px;font-size:12.4px;color:#1a1a1a;width:287.34px;overflow:hidden;padding-bottom:4px;"><span style="display:inline-block;transform:scaleX(1.0008);transform-origin:0 50%;">Pennsylvania Ave</span></div>
<div class="t" style="left:756.25px;top:601.38px;font-size:12.4px;color:#1a1a1a;width:142.17px;overflow:hidden;padding-bottom:4px;"><span style="display:inline-block;transform:scaleX(0.9605);transform-origin:0 50%;">San Francisco</span></div>
<div class="t" style="left:901.42px;top:601.38px;font-size:12.4px;color:#1a1a1a;width:142.17px;overflow:hidden;padding-bottom:4px;"><span style="display:inline-block;transform:scaleX(1.0015);transform-origin:0 50%;">Pending</span></div>
<div class="t" style="right:94.24px;top:601.38px;font-size:12.4px;color:#1a1a1a;transform:scaleX(1.0192);transform-origin:100% 50%;">2017-12-14</div>
<div class="t" style="left:1191.76px;top:601.38px;font-size:12.4px;color:#1a1a1a;width:67.04px;overflow:hidden;padding-bottom:4px;"><span style="display:inline-block;transform:scaleX(1.0053);transform-origin:0 50%;">Listing</span></div>
<div class="r" style="left:0.00px;top:634.30px;width:1258.80px;height:1.00px;background:#d9d9d9;"></div>
<div class="t" style="left:-285.50px;width:600px;text-align:center;top:620.61px;font-size:11.8px;color:#5a5a5a;font-weight:400;">43</div>
<div class="r" style="left:172.57px;top:616.08px;width:1.00px;height:18.72px;background:#d9d9d9;"></div>
<div class="r" style="left:462.91px;top:616.08px;width:1.00px;height:18.72px;background:#d9d9d9;"></div>
<div class="r" style="left:608.08px;top:616.08px;width:1.00px;height:18.72px;background:#d9d9d9;"></div>
<div class="r" style="left:753.25px;top:616.08px;width:1.00px;height:18.72px;background:#d9d9d9;"></div>
<div class="r" style="left:898.42px;top:616.08px;width:1.00px;height:18.72px;background:#d9d9d9;"></div>
<div class="r" style="left:1188.76px;top:616.08px;width:1.00px;height:18.72px;background:#f4f4f4;"></div>
<div class="t" style="left:30.40px;top:620.10px;font-size:12.4px;color:#1a1a1a;width:142.17px;overflow:hidden;padding-bottom:4px;"><span style="display:inline-block;transform:scaleX(0.9956);transform-origin:0 50%;">1033 West End Island, South Beach</span></div>
<div class="t" style="left:175.57px;top:620.10px;font-size:12.4px;color:#1a1a1a;width:142.17px;overflow:hidden;padding-bottom:4px;"><span style="display:inline-block;transform:scaleX(1.0180);transform-origin:0 50%;">3456315631563156</span></div>
<svg class="s" style="left:173px;top:617px;" width="5" height="5" viewBox="0 0 5 5"><path d="M0 0 H5 L0 5 Z" fill="#1e8a3e"/></svg>
<div class="t" style="right:820.09px;top:620.10px;font-size:12.4px;color:#1a1a1a;transform:scaleX(1.0342);transform-origin:100% 50%;">2017-08-11</div>
<div class="t" style="left:465.91px;top:620.10px;font-size:12.4px;color:#1a1a1a;width:142.17px;overflow:hidden;padding-bottom:4px;"><span style="display:inline-block;transform:scaleX(0.9937);transform-origin:0 50%;">West End Island, South Beach</span></div>
<div class="t" style="left:611.08px;top:620.10px;font-size:12.4px;color:#1a1a1a;width:142.17px;overflow:hidden;padding-bottom:4px;"><span style="display:inline-block;transform:scaleX(1.0180);transform-origin:0 50%;">05223</span></div>
<svg class="s" style="left:609px;top:617px;" width="5" height="5" viewBox="0 0 5 5"><path d="M0 0 H5 L0 5 Z" fill="#1e8a3e"/></svg>
<div class="t" style="left:756.25px;top:620.10px;font-size:12.4px;color:#1a1a1a;width:142.17px;overflow:hidden;padding-bottom:4px;"><span style="display:inline-block;transform:scaleX(1.0100);transform-origin:0 50%;">South Skyway office</span></div>
<div class="t" style="left:901.42px;top:620.10px;font-size:12.4px;color:#1a1a1a;width:142.17px;overflow:hidden;padding-bottom:4px;"><span style="display:inline-block;transform:scaleX(1.0015);transform-origin:0 50%;">Pending</span></div>
<div class="t" style="right:94.24px;top:620.10px;font-size:12.4px;color:#1a1a1a;transform:scaleX(1.0192);transform-origin:100% 50%;">2017-09-13</div>
<div class="t" style="left:1191.76px;top:620.10px;font-size:12.4px;color:#1a1a1a;width:67.04px;overflow:hidden;padding-bottom:4px;"><span style="display:inline-block;transform:scaleX(1.0099);transform-origin:0 50%;">Listing &amp; Buying</span></div>
<div class="r" style="left:0.00px;top:653.02px;width:1258.80px;height:1.00px;background:#d9d9d9;"></div>
<div class="t" style="left:-285.50px;width:600px;text-align:center;top:639.33px;font-size:11.8px;color:#5a5a5a;font-weight:400;">44</div>
<div class="r" style="left:172.57px;top:634.80px;width:1.00px;height:18.72px;background:#d9d9d9;"></div>
<div class="r" style="left:462.91px;top:634.80px;width:1.00px;height:18.72px;background:#d9d9d9;"></div>
<div class="r" style="left:608.08px;top:634.80px;width:1.00px;height:18.72px;background:#d9d9d9;"></div>
<div class="r" style="left:753.25px;top:634.80px;width:1.00px;height:18.72px;background:#d9d9d9;"></div>
<div class="r" style="left:898.42px;top:634.80px;width:1.00px;height:18.72px;background:#d9d9d9;"></div>
<div class="r" style="left:1188.76px;top:634.80px;width:1.00px;height:18.72px;background:#f4f4f4;"></div>
<div class="t" style="left:30.40px;top:638.82px;font-size:12.4px;color:#1a1a1a;width:287.34px;overflow:hidden;padding-bottom:4px;"><span style="display:inline-block;transform:scaleX(1.0319);transform-origin:0 50%;">315 W Main Street</span></div>
<div class="t" style="right:820.09px;top:638.82px;font-size:12.4px;color:#1a1a1a;transform:scaleX(1.0192);transform-origin:100% 50%;">2017-05-10</div>
<div class="t" style="left:465.91px;top:638.82px;font-size:12.4px;color:#1a1a1a;width:287.34px;overflow:hidden;padding-bottom:4px;"><span style="display:inline-block;transform:scaleX(1.0410);transform-origin:0 50%;">W Main Street</span></div>
<div class="t" style="left:756.25px;top:638.82px;font-size:12.4px;color:#1a1a1a;width:142.17px;overflow:hidden;padding-bottom:4px;"><span style="display:inline-block;transform:scaleX(1.0124);transform-origin:0 50%;">West Cedar Office</span></div>
<div class="t" style="left:901.42px;top:638.82px;font-size:12.4px;color:#1a1a1a;width:142.17px;overflow:hidden;padding-bottom:4px;"><span style="display:inline-block;transform:scaleX(0.9703);transform-origin:0 50%;">Closed</span></div>
<div class="t" style="right:94.24px;top:638.82px;font-size:12.4px;color:#1a1a1a;transform:scaleX(1.0192);transform-origin:100% 50%;">2017-05-10</div>
<div class="t" style="left:1191.76px;top:638.82px;font-size:12.4px;color:#1a1a1a;width:67.04px;overflow:hidden;padding-bottom:4px;"><span style="display:inline-block;transform:scaleX(1.0053);transform-origin:0 50%;">Listing</span></div>
<div class="r" style="left:0.00px;top:671.74px;width:1258.80px;height:1.00px;background:#d9d9d9;"></div>
<div class="t" style="left:-285.50px;width:600px;text-align:center;top:658.05px;font-size:11.8px;color:#5a5a5a;font-weight:400;">45</div>
<div class="r" style="left:172.57px;top:653.52px;width:1.00px;height:18.72px;background:#d9d9d9;"></div>
<div class="r" style="left:462.91px;top:653.52px;width:1.00px;height:18.72px;background:#d9d9d9;"></div>
<div class="r" style="left:608.08px;top:653.52px;width:1.00px;height:18.72px;background:#d9d9d9;"></div>
<div class="r" style="left:753.25px;top:653.52px;width:1.00px;height:18.72px;background:#d9d9d9;"></div>
<div class="r" style="left:898.42px;top:653.52px;width:1.00px;height:18.72px;background:#d9d9d9;"></div>
<div class="r" style="left:1188.76px;top:653.52px;width:1.00px;height:18.72px;background:#f4f4f4;"></div>
<svg class="s" style="left:80px;top:224px;" width="12" height="18" viewBox="0 0 12 18"><path d="M0.5 0.5 L0.5 14 L3.7 10.9 L6.2 15.8 L8.3 14.8 L5.9 10 L10 10 Z" fill="#fff" stroke="#000" stroke-width="1" stroke-linejoin="miter"/></svg>
<div class="r" style="left:1260.50px;top:195.00px;width:19.00px;height:478.00px;background:#f3f3f3;"></div>
<div class="r" style="left:1262px;top:179px;width:15px;height:15px;background:#fdfdfd;border:1px solid #cfcfcf;box-sizing:border-box;"></div>
<svg class="s" style="left:1266px;top:184px;" width="7" height="5" viewBox="0 0 7 5"><path d="M0 4.5 L3.5 0.5 L7 4.5 Z" fill="#555"/></svg>
<div class="r" style="left:1262px;top:411px;width:15px;height:247px;background:#fdfdfd;border:1px solid #c6c6c6;box-sizing:border-box;"></div>
<div class="r" style="left:1262px;top:659px;width:15px;height:14px;background:#fdfdfd;border:1px solid #d6d6d6;box-sizing:border-box;"></div>
<svg class="s" style="left:1266px;top:663px;" width="7" height="5" viewBox="0 0 7 5"><path d="M0 0.5 L3.5 4.5 L7 0.5 Z" fill="#666"/></svg>
<div class="r" style="left:1278.60px;top:0.00px;width:1.40px;height:720.00px;background:#8a8a8a;"></div>
<div class="r" style="left:1.00px;top:673.00px;width:1278.00px;height:23.00px;background:#f6f6f7;"></div>
<div class="r" style="left:0.00px;top:674.00px;width:1280.00px;height:1.00px;background:#b8b8b8;"></div>
<svg class="s" style="left:22px;top:682px;" width="6" height="8" viewBox="0 0 6 8"><path d="M5.5 0 L0.5 4 L5.5 8 Z" fill="#c8c8c8"/></svg>
<svg class="s" style="left:44px;top:682px;" width="6" height="8" viewBox="0 0 6 8"><path d="M0.5 0 L5.5 4 L0.5 8 Z" fill="#c8c8c8"/></svg>
<div class="r" style="left:81px;top:674px;width:49px;height:20px;background:#fff;border:1px solid #c6c6c6;border-top:none;border-bottom:none;box-sizing:border-box;"></div>
<div class="r" style="left:81.00px;top:692.30px;width:49.00px;height:1.60px;background:#217346;"></div>
<div class="t" style="left:-194.50px;width:600px;text-align:center;top:676.38px;font-size:12.9px;color:#1e6b41;font-weight:700;">Data</div>
<svg class="s" style="left:154px;top:677px;" width="17" height="17" viewBox="0 0 17 17"><circle cx="8.5" cy="8.5" r="7.5" fill="none" stroke="#777" stroke-width="1.1"/><path d="M8.5 4 V13 M4 8.5 H13" stroke="#777" stroke-width="1.3"/></svg>
<svg class="s" style="left:765px;top:678px;" width="3" height="14" viewBox="0 0 3 14"><path d="M1.5 1 V13" stroke="#bbb" stroke-dasharray="1.5 1.5"/></svg>
<div class="r" style="left:780.00px;top:678.00px;width:14.00px;height:14.00px;background:#fdfdfd;"></div>
<svg class="s" style="left:784px;top:681px;" width="5" height="8" viewBox="0 0 5 8"><path d="M4.5 0 L0.5 4 L4.5 8 Z" fill="#555"/></svg>
<div class="r" style="left:794.00px;top:678.00px;width:87.00px;height:14.00px;background:#fdfdfd;"></div>
<div class="r" style="left:793.50px;top:678.00px;width:1.00px;height:14.00px;background:#d0d0d0;"></div>
<div class="r" style="left:881.00px;top:678.00px;width:362.00px;height:14.00px;background:#e6e6e6;"></div>
<div class="r" style="left:880.50px;top:678.00px;width:1.00px;height:14.00px;background:#b8b8b8;"></div>
<svg class="s" style="left:1247px;top:681px;" width="5" height="8" viewBox="0 0 5 8"><path d="M0.5 0 L4.5 4 L0.5 8 Z" fill="#555"/></svg>
<div class="r" style="left:1.00px;top:696.00px;width:1278.00px;height:21.20px;background:#217346;"></div>
<div class="r" style="left:0.00px;top:717.20px;width:1280.00px;height:1.80px;background:#e8e8e8;"></div>
<div class="r" style="left:0.00px;top:719.00px;width:1280.00px;height:1.00px;background:#111;"></div>
<div class="r" style="left:0.00px;top:0.00px;width:1.00px;height:720.00px;background:#8a8a8a;"></div>
<div class="t" style="left:7.00px;top:702.88px;font-size:9.0px;color:#fff;font-weight:400;">READY</div>
<div class="t" style="left:734.00px;top:702.63px;font-size:9.3px;color:#fff;font-weight:400;">AVERAGE: 420719.9142</div>
<div class="t" style="left:851.00px;top:702.63px;font-size:9.3px;color:#fff;font-weight:400;">COUNT: 850</div>
<div class="t" style="left:919.00px;top:702.63px;font-size:9.3px;color:#fff;font-weight:400;">SUM: 99891740</div>
<div class="r" style="left:1005.00px;top:697.00px;width:31.00px;height:20.00px;background:#195a37;"></div>
<svg class="s" style="left:1015px;top:701px;" width="12" height="11" viewBox="0 0 12 11"><rect x="0.5" y="0.5" width="11" height="10" fill="none" stroke="#fff"/><path d="M0.5 3.5 H11.5 M0.5 5.5 H11.5 M0.5 7.5 H11.5" stroke="#fff"/></svg>
<svg class="s" style="left:1047px;top:701px;" width="12" height="11" viewBox="0 0 12 11"><rect x="0.5" y="0.5" width="11" height="10" fill="none" stroke="#fff"/><path d="M3 0.5 V10.5 M9 0.5 V10.5 M4 3 H8 M4 5.5 H8 M4 8 H8" stroke="#fff"/></svg>
<svg class="s" style="left:1079px;top:701px;" width="12" height="11" viewBox="0 0 12 11"><path d="M0.5 0.5 V10.5 H11.5 M0.5 0.5 H7 V6 H0.5" fill="none" stroke="#fff"/><rect x="1" y="1" width="5.5" height="4.5" fill="#cfe0d6"/></svg>
<div class="r" style="left:1106.00px;top:706.50px;width:7.00px;height:1.40px;background:#fff;"></div>
<div class="r" style="left:1117.00px;top:706.80px;width:96.00px;height:0.80px;background:#8fb8a0;"></div>
<div class="r" style="left:1163.00px;top:702.00px;width:4.00px;height:11.00px;background:#fff;"></div>
<div class="r" style="left:1216.00px;top:706.50px;width:10.00px;height:1.40px;background:#fff;"></div>
<div class="r" style="left:1220.30px;top:702.20px;width:1.40px;height:10.00px;background:#fff;"></div>
<div class="t" style="left:1238.00px;top:702.46px;font-size:9.5px;color:#fff;font-weight:400;">100%</div>
</body></html>
